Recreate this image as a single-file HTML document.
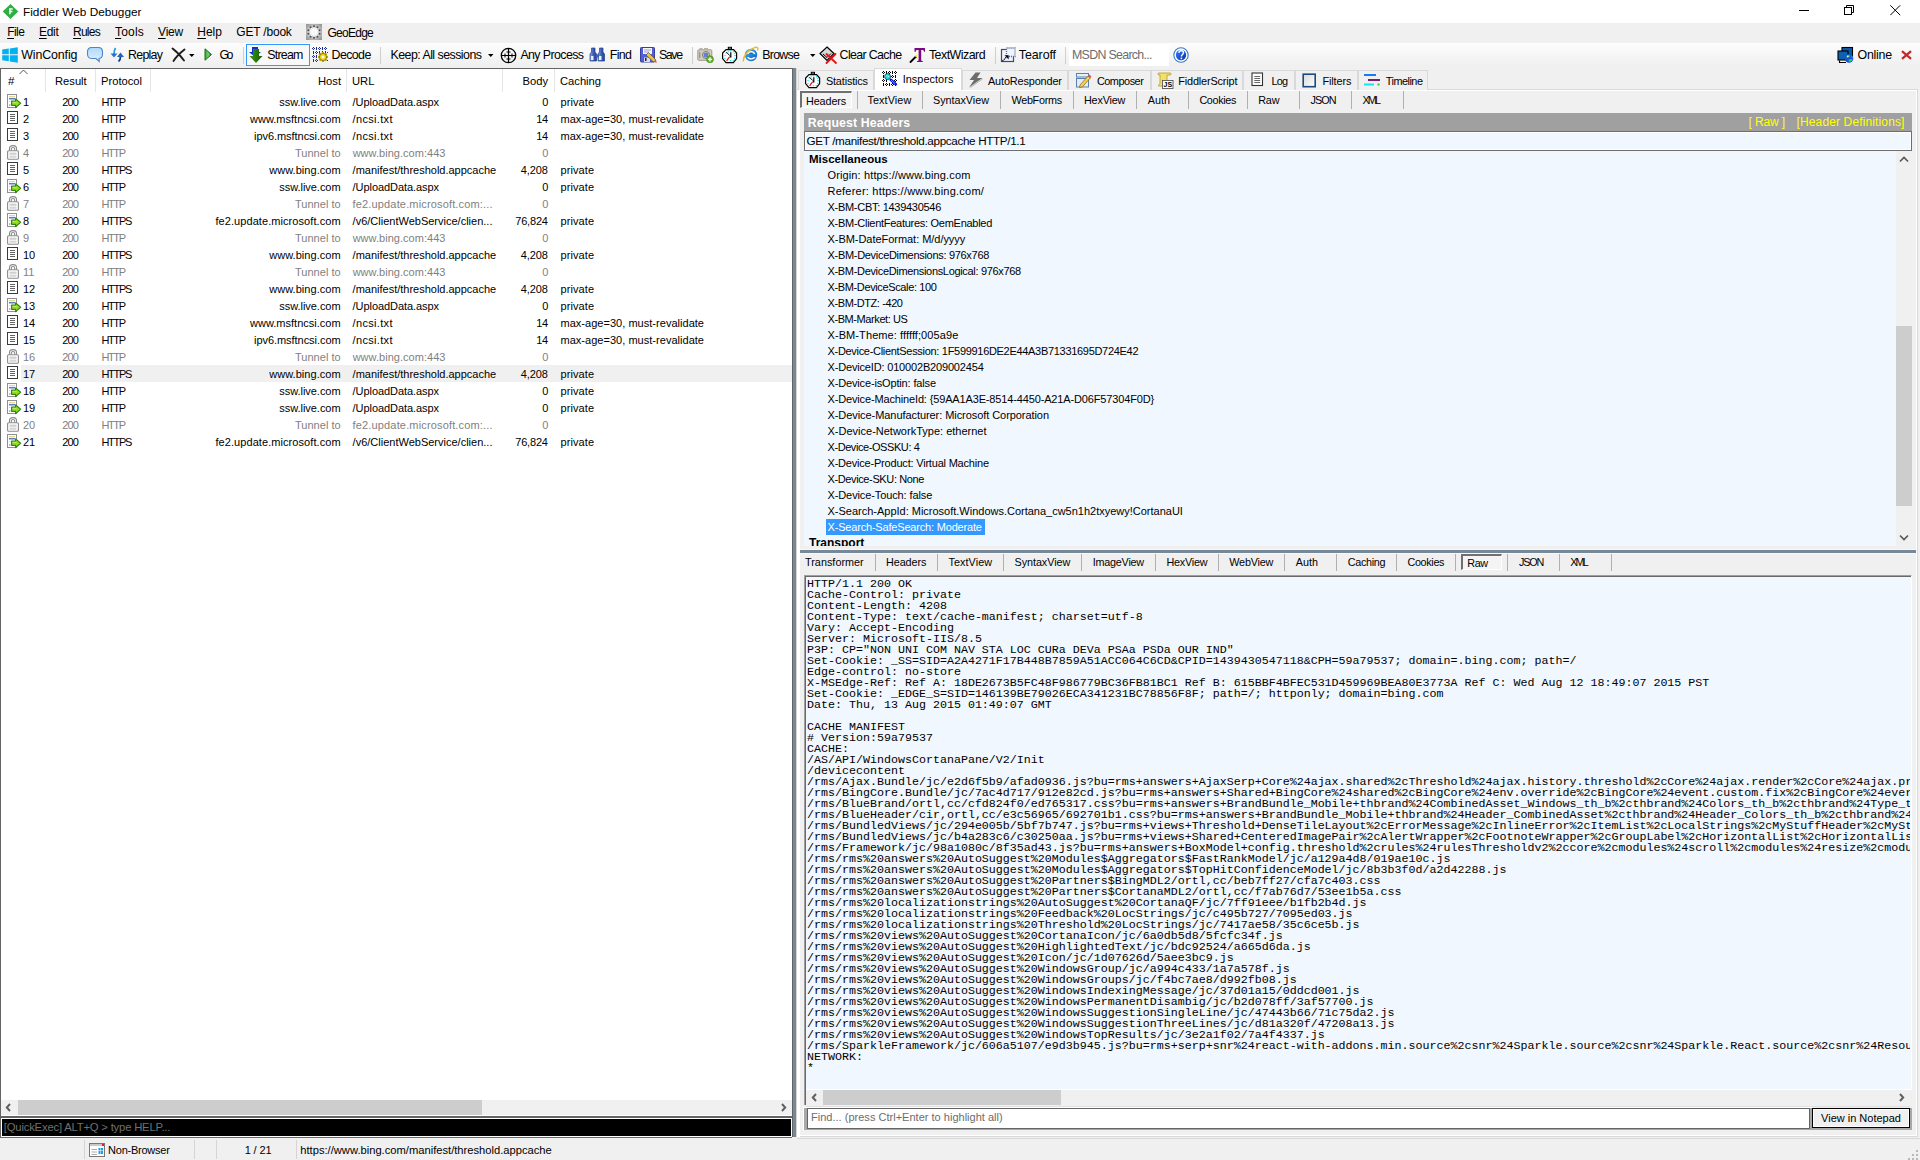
<!DOCTYPE html>
<html><head><meta charset="utf-8"><title>Fiddler Web Debugger</title>
<style>
html,body{margin:0;padding:0;}
body{width:1920px;height:1160px;overflow:hidden;position:relative;background:#f0f0f0;font-family:"Liberation Sans",sans-serif;}
.r{position:absolute;}
.t{position:absolute;white-space:pre;}
.mono{font-family:"Liberation Mono",monospace;}
</style></head><body>

<div class="r" style="left:0px;top:0px;width:1920px;height:23px;background:#ffffff;"></div>
<svg class="r" style="left:1.5px;top:3px;" width="17" height="17" viewBox="0 0 17 17"><path d="M8.5 0.9 L16.3 8.5 L8.5 16.1 L0.7 8.5 Z" fill="#2fae44"/><path d="M7.9 11.2 V6 H10.7 M7.9 8.6 H10.4" stroke="#fff" stroke-width="1.5" fill="none"/></svg>
<div class="t " style="left:23px;top:5.41px;font-size:11.8px;line-height:15px;color:#000;font-weight:normal;">Fiddler Web Debugger</div>
<svg class="r" style="left:1799px;top:10px;" width="10" height="1" viewBox="0 0 10 1"><rect x="0" y="0" width="10" height="1" fill="#000"/></svg>
<svg class="r" style="left:1843px;top:4px;" width="13" height="13" viewBox="0 0 13 13"><rect x="1.5" y="3.5" width="7" height="7" fill="none" stroke="#000"/><path d="M3.5 3.5 V1.5 H10.5 V8.5 H8.5" fill="none" stroke="#000"/></svg>
<svg class="r" style="left:1890px;top:5px;" width="11" height="11" viewBox="0 0 11 11"><path d="M0.3 0.3 L10.2 10.2 M10.2 0.3 L0.3 10.2" stroke="#000" stroke-width="1"/></svg>
<div class="r" style="left:0px;top:23px;width:1920px;height:20px;background:#f0f0f0;"></div>
<div class="t " style="left:7.2px;top:24.84px;font-size:12.0px;line-height:15px;color:#000;font-weight:normal;text-underline-offset:1.5px;letter-spacing:-0.540px;"><u>F</u>ile</div>
<div class="t " style="left:39.0px;top:24.84px;font-size:12.0px;line-height:15px;color:#000;font-weight:normal;text-underline-offset:1.5px;letter-spacing:-0.317px;"><u>E</u>dit</div>
<div class="t " style="left:73.1px;top:24.84px;font-size:12.0px;line-height:15px;color:#000;font-weight:normal;text-underline-offset:1.5px;letter-spacing:-0.790px;"><u>R</u>ules</div>
<div class="t " style="left:115.0px;top:24.84px;font-size:12.0px;line-height:15px;color:#000;font-weight:normal;text-underline-offset:1.5px;letter-spacing:0.183px;"><u>T</u>ools</div>
<div class="t " style="left:158.1px;top:24.84px;font-size:12.0px;line-height:15px;color:#000;font-weight:normal;text-underline-offset:1.5px;letter-spacing:-0.267px;"><u>V</u>iew</div>
<div class="t " style="left:197.25px;top:24.84px;font-size:12.0px;line-height:15px;color:#000;font-weight:normal;text-underline-offset:1.5px;letter-spacing:-0.003px;"><u>H</u>elp</div>
<div class="t " style="left:236.25px;top:24.84px;font-size:12.0px;line-height:15px;color:#000;font-weight:normal;letter-spacing:-0.191px;">GET /book</div>
<svg class="r" style="left:306px;top:24px;" width="16" height="16" viewBox="0 0 16 16"><defs><radialGradient id="ge1" cx="0.5" cy="0.5" r="0.6"><stop offset="0" stop-color="#f4f4f4"/><stop offset="0.6" stop-color="#c8c8c8"/><stop offset="1" stop-color="#9a9a9a"/></radialGradient></defs><rect x="0" y="0" width="16" height="16" fill="url(#ge1)"/><path d="M9.14 8.37 L12.76 9.55 M8.71 8.97 L10.94 12.05 M8.00 9.20 L8.00 13.00 M7.29 8.97 L5.06 12.05 M6.86 8.37 L3.24 9.55 M6.86 7.63 L3.24 6.45 M7.29 7.03 L5.06 3.95 M8.00 6.80 L8.00 3.00 M8.71 7.03 L10.94 3.95 M9.14 7.63 L12.76 6.45 " stroke="#ffffff" stroke-width="1.3"/><circle cx="13.52" cy="9.79" r="1.05" fill="#505050"/><circle cx="11.41" cy="12.69" r="1.05" fill="#505050"/><circle cx="8.00" cy="13.80" r="1.05" fill="#505050"/><circle cx="4.59" cy="12.69" r="1.05" fill="#505050"/><circle cx="2.48" cy="9.79" r="1.05" fill="#505050"/><circle cx="2.48" cy="6.21" r="1.05" fill="#505050"/><circle cx="4.59" cy="3.31" r="1.05" fill="#505050"/><circle cx="8.00" cy="2.20" r="1.05" fill="#505050"/><circle cx="11.41" cy="3.31" r="1.05" fill="#505050"/><circle cx="13.52" cy="6.21" r="1.05" fill="#505050"/><circle cx="8" cy="8" r="2" fill="#f8f8f8"/></svg>
<div class="t " style="left:327.5px;top:25.84px;font-size:12.0px;line-height:15px;color:#000;font-weight:normal;letter-spacing:-0.742px;">GeoEdge</div>
<div class="r" style="left:0px;top:43px;width:1920px;height:25px;background:linear-gradient(#fdfdfd 0%, #f8f8f8 35%, #f3f3f3 65%, #f0f0f0 88%, #f0f0f0 100%);"></div>
<svg class="r" style="left:2px;top:47px;" width="16" height="16" viewBox="0 0 16 16"><path d="M0.2 2.6 L6.8 1.6 V7.3 H0.2 Z M7.8 1.4 L15.8 0.2 V7.3 H7.8 Z M0.2 8.3 H6.8 V14.2 L0.2 13.3 Z M7.8 8.3 H15.8 V15.8 L7.8 14.4 Z" fill="#03b0f0"/></svg>
<div class="t " style="left:21.25px;top:46.70px;font-size:12.4px;line-height:16px;color:#000;font-weight:normal;letter-spacing:-0.122px;">WinConfig</div>
<svg class="r" style="left:86px;top:46px;" width="18" height="17" viewBox="0 0 18 17"><defs><linearGradient id="bg1" x1="0" y1="0" x2="0" y2="1"><stop offset="0" stop-color="#b0d8fb"/><stop offset="1" stop-color="#e0f2ff"/></linearGradient></defs><path d="M5.5 1.5 H12.5 C15 1.5 16.5 3.2 16.5 6 V8 C16.5 10.6 15 12.5 12.5 12.5 H13 L13.2 15.5 L10 12.5 H5.5 C3 12.5 1.5 10.6 1.5 8 V6 C1.5 3.2 3 1.5 5.5 1.5 Z" fill="url(#bg1)" stroke="#4a86c8" stroke-width="1.1"/></svg>
<svg class="r" style="left:109px;top:47px;" width="16" height="16" viewBox="0 0 16 16"><path d="M6.5 1 C5.5 2.5 5 4 5 7" stroke="#1ea0e0" stroke-width="1.8" fill="none"/><path d="M1.5 6.5 H8.5 L5 10.5 Z" fill="#2a6fd0"/><path d="M11.5 9.5 C11.5 12 11 13.5 9.5 14.5" stroke="#123a8a" stroke-width="1.8" fill="none"/><path d="M8 10 H15 L11.5 5.5 Z" fill="#2a60c0"/></svg>
<div class="t " style="left:128.1px;top:46.70px;font-size:12.4px;line-height:16px;color:#000;font-weight:normal;letter-spacing:-0.765px;">Replay</div>
<svg class="r" style="left:171px;top:47px;" width="16" height="16" viewBox="0 0 16 16"><path d="M1.5 1.5 C5 4 9 8 13 13.5 M13.5 2.5 C9 6 5 10 2.5 14" stroke="#1c1c1c" stroke-width="1.9" fill="none" stroke-linecap="round"/></svg>
<svg class="r" style="left:189px;top:54px;" width="6" height="4" viewBox="0 0 6 4"><path d="M0 0 H5.5 L2.75 3 Z" fill="#000"/></svg>
<svg class="r" style="left:204px;top:48px;" width="9" height="13" viewBox="0 0 9 13"><defs><linearGradient id="gg1" x1="0" y1="0" x2="1" y2="0"><stop offset="0" stop-color="#40a040"/><stop offset="0.5" stop-color="#70d070"/><stop offset="1" stop-color="#208020"/></linearGradient></defs><path d="M1 0.8 L7.5 6.5 L1 12.2 Z" fill="url(#gg1)" stroke="#137013" stroke-width="1"/></svg>
<div class="t " style="left:219.4px;top:46.70px;font-size:12.4px;line-height:16px;color:#000;font-weight:normal;letter-spacing:-2.454px;">Go</div>
<div class="r" style="left:243px;top:47px;width:1px;height:17px;background:#cfcfcf;"></div>
<div class="r" style="left:246px;top:44px;width:64px;height:22px;background:#f8f8f8;box-sizing:border-box;border:1px solid #3399ff;"></div>
<svg class="r" style="left:249px;top:46px;" width="14" height="18" viewBox="0 0 14 18"><path d="M3 1 H9 V6 H12 L6 11 L0 6 H3 Z" fill="#1030d0"/><defs><linearGradient id="sg1" x1="0" y1="0" x2="1" y2="0"><stop offset="0" stop-color="#3a9a10"/><stop offset="1" stop-color="#1a5a08"/></linearGradient></defs><path d="M4 3 H10 V10 H13.5 L7 17 L0.5 10 H4 Z" fill="url(#sg1)"/></svg>
<div class="t " style="left:267.2px;top:46.70px;font-size:12.4px;line-height:16px;color:#000;font-weight:normal;letter-spacing:-0.738px;">Stream</div>
<svg class="r" style="left:311px;top:46px;" width="18" height="17" viewBox="0 0 18 17"><g fill="#1a2a9a"><rect x="2.0" y="1.0" width="1" height="1"/><rect x="1.0" y="2.0" width="1" height="1"/><rect x="3.0" y="2.0" width="1" height="1"/><rect x="2.0" y="3.0" width="1" height="1"/><rect x="5.0" y="1.0" width="1" height="3"/><rect x="8.0" y="1.0" width="1" height="1"/><rect x="7.0" y="2.0" width="1" height="1"/><rect x="9.0" y="2.0" width="1" height="1"/><rect x="8.0" y="3.0" width="1" height="1"/><rect x="11.0" y="1.0" width="1" height="3"/><rect x="14.0" y="1.0" width="1" height="1"/><rect x="13.0" y="2.0" width="1" height="1"/><rect x="15.0" y="2.0" width="1" height="1"/><rect x="14.0" y="3.0" width="1" height="1"/><rect x="2.0" y="5.0" width="1" height="3"/><rect x="5.0" y="5.0" width="1" height="1"/><rect x="4.0" y="6.0" width="1" height="1"/><rect x="6.0" y="6.0" width="1" height="1"/><rect x="5.0" y="7.0" width="1" height="1"/><rect x="8.0" y="5.0" width="1" height="3"/><rect x="11.0" y="5.0" width="1" height="3"/><rect x="14.0" y="5.0" width="1" height="3"/><rect x="2.0" y="9.0" width="1" height="1"/><rect x="1.0" y="10.0" width="1" height="1"/><rect x="3.0" y="10.0" width="1" height="1"/><rect x="2.0" y="11.0" width="1" height="1"/><rect x="5.0" y="9.0" width="1" height="3"/><rect x="2.0" y="13.0" width="1" height="3"/><rect x="5.0" y="13.0" width="1" height="1"/><rect x="4.0" y="14.0" width="1" height="1"/><rect x="6.0" y="14.0" width="1" height="1"/><rect x="5.0" y="15.0" width="1" height="1"/><rect x="16" y="6" width="1" height="1"/><rect x="16" y="14" width="1" height="1"/></g><g fill="#c8a800"><rect x="10.9" y="6" width="2.2" height="2.4" transform="rotate(0 12 11)"/><rect x="10.9" y="6" width="2.2" height="2.4" transform="rotate(45 12 11)"/><rect x="10.9" y="6" width="2.2" height="2.4" transform="rotate(90 12 11)"/><rect x="10.9" y="6" width="2.2" height="2.4" transform="rotate(135 12 11)"/><rect x="10.9" y="6" width="2.2" height="2.4" transform="rotate(180 12 11)"/><rect x="10.9" y="6" width="2.2" height="2.4" transform="rotate(225 12 11)"/><rect x="10.9" y="6" width="2.2" height="2.4" transform="rotate(270 12 11)"/><rect x="10.9" y="6" width="2.2" height="2.4" transform="rotate(315 12 11)"/></g><circle cx="12" cy="11" r="3.6" fill="#f0d820" stroke="#807000" stroke-width="0.9"/><circle cx="12" cy="11" r="1.3" fill="#fff"/></svg>
<div class="t " style="left:331.6px;top:46.70px;font-size:12.4px;line-height:16px;color:#000;font-weight:normal;letter-spacing:-0.604px;">Decode</div>
<div class="r" style="left:380px;top:47px;width:1px;height:17px;background:#cfcfcf;"></div>
<div class="t " style="left:390.5px;top:46.70px;font-size:12.4px;line-height:16px;color:#000;font-weight:normal;letter-spacing:-0.537px;">Keep: All sessions</div>
<svg class="r" style="left:488px;top:54px;" width="6" height="4" viewBox="0 0 6 4"><path d="M0 0 H5.5 L2.75 3 Z" fill="#000"/></svg>
<svg class="r" style="left:500px;top:47px;" width="17" height="17" viewBox="0 0 17 17"><circle cx="8.5" cy="8.5" r="7.2" fill="none" stroke="#000" stroke-width="1.3"/><path d="M8.5 1.5 V15.5 M1.5 8.5 H15.5" stroke="#000" stroke-width="1.2"/><path d="M5 6.5 V10.5 M12 6.5 V10.5 M6.5 5 H10.5 M6.5 12 H10.5" stroke="#000" stroke-width="1"/></svg>
<div class="t " style="left:520.4px;top:46.70px;font-size:12.4px;line-height:16px;color:#000;font-weight:normal;letter-spacing:-0.593px;">Any Process</div>
<svg class="r" style="left:589px;top:47px;" width="17" height="15" viewBox="0 0 17 15"><defs><linearGradient id="bn1" x1="0" y1="0" x2="1" y2="0"><stop offset="0" stop-color="#8aa8e0"/><stop offset="0.5" stop-color="#3a5fb8"/><stop offset="1" stop-color="#24418a"/></linearGradient></defs><path d="M2.5 1 H6 V5 L7.5 7 V14 H1 V7 L2.5 5 Z" fill="url(#bn1)" stroke="#24418a" stroke-width="0.7"/><path d="M10.5 1 H14 V5 L15.5 7 V14 H9 V7 L10.5 5 Z" fill="url(#bn1)" stroke="#24418a" stroke-width="0.7"/><rect x="7" y="7.5" width="3" height="3" fill="#3a5fb8"/><rect x="2" y="9" width="2.5" height="4" fill="#e8eefa"/><rect x="10" y="9" width="2.5" height="4" fill="#e8eefa"/></svg>
<div class="t " style="left:609.8px;top:46.70px;font-size:12.4px;line-height:16px;color:#000;font-weight:normal;letter-spacing:-0.673px;">Find</div>
<svg class="r" style="left:640px;top:47px;" width="17" height="17" viewBox="0 0 17 17"><rect x="0.5" y="0.5" width="14" height="14.5" rx="0.8" fill="#5060d8" stroke="#3a40a0"/><rect x="3" y="1" width="9" height="6" fill="#f4f4fa"/><path d="M4 3 H11 M4 5 H9" stroke="#9090c0" stroke-width="0.8"/><rect x="4" y="10.5" width="6" height="4.5" fill="#d8dcf0"/><rect x="5" y="11" width="1.5" height="3" fill="#222"/><path d="M6 8 L13.5 15 L16 13 L8.5 5.5 Z" fill="#f0c040" stroke="#505050" stroke-width="0.7"/><path d="M13.5 15 L16 13 L16.8 15.8 Z" fill="#e05050"/></svg>
<div class="t " style="left:658.9px;top:46.70px;font-size:12.4px;line-height:16px;color:#000;font-weight:normal;letter-spacing:-1.357px;">Save</div>
<div class="r" style="left:692px;top:47px;width:1px;height:17px;background:#cfcfcf;"></div>
<svg class="r" style="left:697px;top:47px;" width="18" height="16" viewBox="0 0 18 16"><rect x="0.8" y="2.8" width="14" height="10.5" rx="1" fill="#d4cfc4" stroke="#a09a8a" stroke-width="1"/><rect x="2.5" y="1" width="3" height="2" fill="#b8b2a4"/><rect x="7" y="1" width="4" height="2" fill="#b8b2a4"/><path d="M2 5 L3.5 6 L2 7 L3.5 8 L2 9 L3.5 10 L2 11" stroke="#8a857a" stroke-width="0.8" fill="none"/><circle cx="9" cy="8" r="3.6" fill="#c0b8a8" stroke="#8a857a"/><rect x="7" y="6" width="4" height="4" fill="#6080e0"/><circle cx="13" cy="12.3" r="3.5" fill="#60b020" stroke="#3a8a10" stroke-width="0.6"/><path d="M13 10.2 V14.4 M10.9 12.3 H15.1" stroke="#fff" stroke-width="1.3"/></svg>
<svg class="r" style="left:721px;top:46px;" width="17" height="18" viewBox="0 0 17 18"><rect x="7.3" y="1.3" width="3.2" height="1.6" fill="none" stroke="#000" stroke-width="1"/><path d="M5 3.6 H12.6 L15.6 7 V12.6 L12.4 16.6 H5 L1.6 12.6 V7 Z" fill="#fff" stroke="#000" stroke-width="1.2"/><g fill="#10e8f0"><rect x="9" y="4.3" width="1.2" height="1.2"/><rect x="11.8" y="5.2" width="1.2" height="1.2"/><rect x="13.2" y="7" width="1.2" height="1.2"/><rect x="13.4" y="9" width="1.4" height="1.2"/><rect x="13.2" y="11.8" width="1.2" height="1.2"/><rect x="11.6" y="14" width="1.2" height="1.2"/><rect x="8.8" y="14" width="1.2" height="1.2"/><rect x="3.4" y="12" width="1.2" height="1.2"/><rect x="3.4" y="9" width="1.2" height="1.2"/><rect x="4.4" y="6.4" width="1.2" height="1.2"/><rect x="6.6" y="5.2" width="1.2" height="1.2"/></g><path d="M5.4 6.2 L8.8 9.6" stroke="#000" stroke-width="1"/><path d="M9.8 6.2 V10.8 H8.6" stroke="#000" stroke-width="1.2" fill="none"/><path d="M8.4 11 L5.6 14.8" stroke="#e00000" stroke-width="1.2"/></svg>
<svg class="r" style="left:742px;top:46px;" width="17" height="17" viewBox="0 0 17 17"><defs><linearGradient id="ie1" x1="0" y1="0" x2="1" y2="1"><stop offset="0" stop-color="#40b0f0"/><stop offset="1" stop-color="#1060c0"/></linearGradient></defs><circle cx="9" cy="9" r="6.2" fill="url(#ie1)"/><path d="M4.8 8.6 H13.4 C13.2 6.5 11.5 5 9.2 5 C7 5 5.2 6.4 4.8 8.6 Z" fill="#fff"/><rect x="4.8" y="8" width="8.4" height="2.2" fill="url(#ie1)"/><path d="M6.5 8.2 C6.8 7 7.8 6.5 9.2 6.5 C10.6 6.5 11.5 7.2 11.8 8.2 Z" fill="#1a70c8"/><path d="M5 11 C6 13 7.8 13.8 9.5 13.6 C11.5 13.3 12.8 12.5 13.6 11.2 H11.2 C10.6 11.9 9.9 12.2 9.2 12.2 C7.9 12.2 7 11.7 6.6 11 Z" fill="#fff"/><path d="M1.5 15.5 C0.5 11 6 4 12 1.8 C15.5 0.5 16.5 2 15.5 4.5" stroke="#f0b820" stroke-width="1.4" fill="none"/></svg>
<div class="t " style="left:762.2px;top:46.70px;font-size:12.4px;line-height:16px;color:#000;font-weight:normal;letter-spacing:-0.711px;">Browse</div>
<svg class="r" style="left:810px;top:54px;" width="6" height="4" viewBox="0 0 6 4"><path d="M0 0 H5.5 L2.75 3 Z" fill="#000"/></svg>
<svg class="r" style="left:819px;top:46px;" width="18" height="18" viewBox="0 0 18 18"><path d="M8 1 L15 7.5 L8 14.5 L1 7.5 Z" fill="#d8d8d8" stroke="#000" stroke-width="1.2"/><path d="M4 8 L8 11.5 L12 7.5" stroke="#000" stroke-width="1" fill="none"/><path d="M7.5 8 L17 17 M16.5 8 L7.5 17" stroke="#e81010" stroke-width="1.8" stroke-linecap="round"/></svg>
<div class="t " style="left:839.6px;top:46.70px;font-size:12.4px;line-height:16px;color:#000;font-weight:normal;letter-spacing:-0.644px;">Clear Cache</div>
<svg class="r" style="left:909px;top:47px;" width="18" height="16" viewBox="0 0 18 16"><path d="M5.5 1 H16 V4.8 H15 L14.3 3 H12.2 V13.5 L13.8 14.3 V15 H8 V14.3 L9.6 13.5 V3 H7.4 L6.7 4.8 H5.5 Z" fill="#7a0a80"/><path d="M1.5 15 L7 9.5" stroke="#000" stroke-width="1.8" stroke-linecap="round"/><circle cx="7.3" cy="8.8" r="1.3" fill="#ffff20"/></svg>
<div class="t " style="left:928.9px;top:46.70px;font-size:12.4px;line-height:16px;color:#000;font-weight:normal;letter-spacing:-0.513px;">TextWizard</div>
<div class="r" style="left:995px;top:47px;width:1px;height:17px;background:#cfcfcf;"></div>
<svg class="r" style="left:1000px;top:47px;" width="17" height="16" viewBox="0 0 17 16"><rect x="1.5" y="2.5" width="12" height="12" fill="#f4f2f8" stroke="#2f4f80" stroke-width="1.2"/><rect x="6.5" y="1" width="8.5" height="8.5" fill="#f0f4ff" stroke="#5a6a9a" stroke-width="1.3" stroke-dasharray="1.1 0.9"/><path d="M2.5 14 L8 8.5" stroke="#000a30" stroke-width="1.3" stroke-dasharray="1.2 0.8"/><path d="M4.5 8.2 H8.7 V12.4 Z" fill="#000a30"/></svg>
<div class="t " style="left:1018.8px;top:46.70px;font-size:12.4px;line-height:16px;color:#000;font-weight:normal;letter-spacing:-0.066px;">Tearoff</div>
<div class="r" style="left:1065px;top:47px;width:1px;height:17px;background:#cfcfcf;"></div>
<div class="r" style="left:1069px;top:44px;width:100px;height:22px;background:#ffffff;"></div>
<div class="t " style="left:1072.0px;top:46.70px;font-size:12.4px;line-height:16px;color:#6d6d6d;font-weight:normal;letter-spacing:-0.699px;">MSDN Search...</div>
<svg class="r" style="left:1173px;top:47px;" width="16" height="16" viewBox="0 0 16 16"><defs><linearGradient id="hp1" x1="0" y1="0" x2="1" y2="1"><stop offset="0" stop-color="#3a80f8"/><stop offset="1" stop-color="#0030b0"/></linearGradient></defs><circle cx="8" cy="8" r="7.2" fill="#fff" stroke="#3a78c8" stroke-width="1.1"/><circle cx="8" cy="8" r="5.2" fill="url(#hp1)"/><path d="M5.8 5.8 C6 4.3 7 3.8 8.2 3.8 C9.6 3.8 10.5 4.7 10.5 5.8 C10.5 7.3 8.4 7.6 8.4 9.4" stroke="#fff" stroke-width="1.4" fill="none"/><rect x="7.6" y="10.6" width="1.6" height="1.6" fill="#fff"/></svg>
<svg class="r" style="left:1837px;top:46px;" width="18" height="18" viewBox="0 0 18 18"><rect x="5" y="1.5" width="10.5" height="9" fill="#0a5aa8" stroke="#000" stroke-width="1.1"/><rect x="1" y="5" width="10" height="9" fill="#1060b0" stroke="#000" stroke-width="1.1"/><path d="M2.5 14.5 V16.5 H9" stroke="#000" stroke-width="1.1" fill="none"/><circle cx="12" cy="12.5" r="4.3" fill="#1a50e0"/><path d="M9.5 10.5 C10.5 9 12.5 9 13 10 C12 11 11 11.5 9.8 11.5 Z M11.5 14 C13 13 14.5 13 15.5 13.2 C15 15 13.5 16 12 15.5 Z M14 9.5 C15 10 16 11 16 12 C15 11.5 14.5 11 14 9.5 Z" fill="#20e040"/><circle cx="10.8" cy="10.3" r="0.9" fill="#e0ffe0"/></svg>
<div class="t " style="left:1857.6px;top:46.70px;font-size:12.4px;line-height:16px;color:#000;font-weight:normal;letter-spacing:-0.267px;">Online</div>
<svg class="r" style="left:1901px;top:50px;" width="11" height="10" viewBox="0 0 11 10"><path d="M1.8 1.8 L9.2 8.2 M9.2 1.8 L1.8 8.2" stroke="#c02a2a" stroke-width="2.2" stroke-linecap="square"/></svg>
<div class="r" style="left:0px;top:68px;width:792px;height:1069px;background:#ffffff;"></div>
<div class="r" style="left:0px;top:68px;width:792px;height:1px;background:#646464;"></div>
<div class="r" style="left:0px;top:68px;width:1px;height:1070px;background:#646464;"></div>
<div class="r" style="left:45px;top:69px;width:1px;height:23px;background:#e5e5e5;"></div>
<div class="r" style="left:95px;top:69px;width:1px;height:23px;background:#e5e5e5;"></div>
<div class="r" style="left:150px;top:69px;width:1px;height:23px;background:#e5e5e5;"></div>
<div class="r" style="left:346px;top:69px;width:1px;height:23px;background:#e5e5e5;"></div>
<div class="r" style="left:502px;top:69px;width:1px;height:23px;background:#e5e5e5;"></div>
<div class="r" style="left:554px;top:69px;width:1px;height:23px;background:#e5e5e5;"></div>
<svg class="r" style="left:19px;top:69px;" width="9" height="6" viewBox="0 0 9 6"><path d="M0.5 5 L4.5 1 L8.5 5" fill="none" stroke="#555" stroke-width="1"/></svg>
<div class="t " style="left:8px;top:74.02px;font-size:11.5px;line-height:14px;color:#000;font-weight:normal;">#</div>
<div class="t " style="left:55px;top:74.12px;font-size:11.2px;line-height:14px;color:#000;font-weight:normal;">Result</div>
<div class="t " style="left:101px;top:74.12px;font-size:11.2px;line-height:14px;color:#000;font-weight:normal;">Protocol</div>
<div class="t " style="right:1579px;top:74.12px;font-size:11.2px;line-height:14px;color:#000;font-weight:normal;">Host</div>
<div class="t " style="left:352px;top:74.12px;font-size:11.2px;line-height:14px;color:#000;font-weight:normal;">URL</div>
<div class="t " style="right:1372px;top:74.12px;font-size:11.2px;line-height:14px;color:#000;font-weight:normal;">Body</div>
<div class="t " style="left:560px;top:74.12px;font-size:11.2px;line-height:14px;color:#000;font-weight:normal;">Caching</div>
<svg class="r" style="left:7px;top:94px;" width="15" height="15" viewBox="0 0 15 15"><rect x="0.5" y="0.5" width="9" height="13" fill="#fff" stroke="#8f8f8f"/><path d="M2 2.5 H8" stroke="#e8d890" stroke-width="1"/><path d="M2 4.7 H8" stroke="#5a80c0" stroke-width="1.6"/><path d="M2 7.5 H3.5" stroke="#f0c8d8" stroke-width="1.2"/><path d="M2 10.5 H3.5 M2 11.5 H3.5" stroke="#c8b0e8" stroke-width="1.2"/><path d="M4.6 7.2 H8.6 V4.9 L13.6 9.3 L8.6 13.6 V11.3 H4.6 Z" fill="#98dc20" stroke="#2f8a10" stroke-width="1.2" stroke-linejoin="round"/><path d="M5.5 8.3 H9.5" stroke="#d0f080" stroke-width="0.8"/></svg>
<div class="t " style="left:23px;top:95.19px;font-size:11px;line-height:14px;color:#000000;font-weight:normal;">1</div>
<div class="t " style="left:62.2px;top:95.19px;font-size:11px;line-height:14px;color:#000000;font-weight:normal;letter-spacing:-0.785px;">200</div>
<div class="t " style="left:101.4px;top:95.19px;font-size:11px;line-height:14px;color:#000000;font-weight:normal;letter-spacing:-1.370px;">HTTP</div>
<div class="t " style="left:279.2px;top:95.19px;font-size:11px;line-height:14px;color:#000000;font-weight:normal;letter-spacing:-0.028px;">ssw.live.com</div>
<div class="t " style="left:352.6px;top:95.19px;font-size:11px;line-height:14px;color:#000000;font-weight:normal;letter-spacing:-0.070px;">/UploadData.aspx</div>
<div class="t " style="left:542.3px;top:95.19px;font-size:11px;line-height:14px;color:#000000;font-weight:normal;letter-spacing:-0.405px;">0</div>
<div class="t " style="left:560.5px;top:95.19px;font-size:11px;line-height:14px;color:#000000;font-weight:normal;letter-spacing:0.083px;">private</div>
<svg class="r" style="left:7px;top:111px;" width="12" height="14" viewBox="0 0 12 14"><rect x="0.5" y="0.5" width="10" height="12" fill="#fff" stroke="#3a3a3a"/><path d="M3 3.5 H8 M3 5.5 H8 M3 7.5 H8 M3 9.5 H8" stroke="#505050" stroke-width="0.9"/></svg>
<div class="t " style="left:23px;top:112.19px;font-size:11px;line-height:14px;color:#000000;font-weight:normal;">2</div>
<div class="t " style="left:62.2px;top:112.19px;font-size:11px;line-height:14px;color:#000000;font-weight:normal;letter-spacing:-0.785px;">200</div>
<div class="t " style="left:101.4px;top:112.19px;font-size:11px;line-height:14px;color:#000000;font-weight:normal;letter-spacing:-1.370px;">HTTP</div>
<div class="t " style="left:250.055px;top:112.19px;font-size:11px;line-height:14px;color:#000000;font-weight:normal;letter-spacing:0.005px;">www.msftncsi.com</div>
<div class="t " style="left:352.6px;top:112.19px;font-size:11px;line-height:14px;color:#000000;font-weight:normal;letter-spacing:0.326px;">/ncsi.txt</div>
<div class="t " style="left:536.2px;top:112.19px;font-size:11px;line-height:14px;color:#000000;font-weight:normal;letter-spacing:-0.410px;">14</div>
<div class="t " style="left:560.5px;top:112.19px;font-size:11px;line-height:14px;color:#000000;font-weight:normal;letter-spacing:0.028px;">max-age=30, must-revalidate</div>
<svg class="r" style="left:7px;top:128px;" width="12" height="14" viewBox="0 0 12 14"><rect x="0.5" y="0.5" width="10" height="12" fill="#fff" stroke="#3a3a3a"/><path d="M3 3.5 H8 M3 5.5 H8 M3 7.5 H8 M3 9.5 H8" stroke="#505050" stroke-width="0.9"/></svg>
<div class="t " style="left:23px;top:129.19px;font-size:11px;line-height:14px;color:#000000;font-weight:normal;">3</div>
<div class="t " style="left:62.2px;top:129.19px;font-size:11px;line-height:14px;color:#000000;font-weight:normal;letter-spacing:-0.785px;">200</div>
<div class="t " style="left:101.4px;top:129.19px;font-size:11px;line-height:14px;color:#000000;font-weight:normal;letter-spacing:-1.370px;">HTTP</div>
<div class="t " style="left:254.0px;top:129.19px;font-size:11px;line-height:14px;color:#000000;font-weight:normal;letter-spacing:-0.050px;">ipv6.msftncsi.com</div>
<div class="t " style="left:352.6px;top:129.19px;font-size:11px;line-height:14px;color:#000000;font-weight:normal;letter-spacing:0.326px;">/ncsi.txt</div>
<div class="t " style="left:536.2px;top:129.19px;font-size:11px;line-height:14px;color:#000000;font-weight:normal;letter-spacing:-0.410px;">14</div>
<div class="t " style="left:560.5px;top:129.19px;font-size:11px;line-height:14px;color:#000000;font-weight:normal;letter-spacing:0.028px;">max-age=30, must-revalidate</div>
<svg class="r" style="left:7px;top:145px;" width="13" height="15" viewBox="0 0 13 15"><path d="M2.5 5.8 V3.5 C2.5 1.4 4 0.6 6 0.6 C8 0.6 9.5 1.4 9.5 3.5 V5.8" fill="none" stroke="#8a8a8a" stroke-width="1.1"/><path d="M4.3 5.8 V4.2 C4.3 3 5 2.5 6 2.5 C7 2.5 7.7 3 7.7 4.2 V5.8" fill="none" stroke="#8a8a8a" stroke-width="1.1"/><rect x="0.6" y="5.8" width="10.8" height="8.4" rx="1" fill="#fff" stroke="#8a8a8a" stroke-width="1.1"/><rect x="2.5" y="7.6" width="7" height="2.2" fill="#d0d0d0"/><rect x="2.5" y="10.6" width="7" height="2.2" fill="#d6d6d6"/></svg>
<div class="t " style="left:23px;top:146.19px;font-size:11px;line-height:14px;color:#7f7f7f;font-weight:normal;">4</div>
<div class="t " style="left:62.2px;top:146.19px;font-size:11px;line-height:14px;color:#7f7f7f;font-weight:normal;letter-spacing:-0.785px;">200</div>
<div class="t " style="left:101.4px;top:146.19px;font-size:11px;line-height:14px;color:#7f7f7f;font-weight:normal;letter-spacing:-1.370px;">HTTP</div>
<div class="t " style="left:295.0px;top:146.19px;font-size:11px;line-height:14px;color:#7f7f7f;font-weight:normal;letter-spacing:0.021px;">Tunnel to</div>
<div class="t " style="left:352.65500000000003px;top:146.19px;font-size:11px;line-height:14px;color:#7f7f7f;font-weight:normal;letter-spacing:0.033px;">www.bing.com:443</div>
<div class="t " style="left:542.3px;top:146.19px;font-size:11px;line-height:14px;color:#7f7f7f;font-weight:normal;letter-spacing:-0.405px;">0</div>
<svg class="r" style="left:7px;top:162px;" width="12" height="14" viewBox="0 0 12 14"><rect x="0.5" y="0.5" width="10" height="12" fill="#fff" stroke="#3a3a3a"/><path d="M3 3.5 H8 M3 5.5 H8 M3 7.5 H8 M3 9.5 H8" stroke="#505050" stroke-width="0.9"/></svg>
<div class="t " style="left:23px;top:163.19px;font-size:11px;line-height:14px;color:#000000;font-weight:normal;">5</div>
<div class="t " style="left:62.2px;top:163.19px;font-size:11px;line-height:14px;color:#000000;font-weight:normal;letter-spacing:-0.785px;">200</div>
<div class="t " style="left:101.4px;top:163.19px;font-size:11px;line-height:14px;color:#000000;font-weight:normal;letter-spacing:-1.295px;">HTTPS</div>
<div class="t " style="left:269.255px;top:163.19px;font-size:11px;line-height:14px;color:#000000;font-weight:normal;letter-spacing:0.041px;">www.bing.com</div>
<div class="t " style="left:352.6px;top:163.19px;font-size:11px;line-height:14px;color:#000000;font-weight:normal;letter-spacing:-0.004px;">/manifest/threshold.appcache</div>
<div class="t " style="left:520.7px;top:163.19px;font-size:11px;line-height:14px;color:#000000;font-weight:normal;letter-spacing:-0.064px;">4,208</div>
<div class="t " style="left:560.5px;top:163.19px;font-size:11px;line-height:14px;color:#000000;font-weight:normal;letter-spacing:0.083px;">private</div>
<svg class="r" style="left:7px;top:179px;" width="15" height="15" viewBox="0 0 15 15"><rect x="0.5" y="0.5" width="9" height="13" fill="#fff" stroke="#8f8f8f"/><path d="M2 2.5 H8" stroke="#e8d890" stroke-width="1"/><path d="M2 4.7 H8" stroke="#5a80c0" stroke-width="1.6"/><path d="M2 7.5 H3.5" stroke="#f0c8d8" stroke-width="1.2"/><path d="M2 10.5 H3.5 M2 11.5 H3.5" stroke="#c8b0e8" stroke-width="1.2"/><path d="M4.6 7.2 H8.6 V4.9 L13.6 9.3 L8.6 13.6 V11.3 H4.6 Z" fill="#98dc20" stroke="#2f8a10" stroke-width="1.2" stroke-linejoin="round"/><path d="M5.5 8.3 H9.5" stroke="#d0f080" stroke-width="0.8"/></svg>
<div class="t " style="left:23px;top:180.19px;font-size:11px;line-height:14px;color:#000000;font-weight:normal;">6</div>
<div class="t " style="left:62.2px;top:180.19px;font-size:11px;line-height:14px;color:#000000;font-weight:normal;letter-spacing:-0.785px;">200</div>
<div class="t " style="left:101.4px;top:180.19px;font-size:11px;line-height:14px;color:#000000;font-weight:normal;letter-spacing:-1.370px;">HTTP</div>
<div class="t " style="left:279.2px;top:180.19px;font-size:11px;line-height:14px;color:#000000;font-weight:normal;letter-spacing:-0.028px;">ssw.live.com</div>
<div class="t " style="left:352.6px;top:180.19px;font-size:11px;line-height:14px;color:#000000;font-weight:normal;letter-spacing:-0.070px;">/UploadData.aspx</div>
<div class="t " style="left:542.3px;top:180.19px;font-size:11px;line-height:14px;color:#000000;font-weight:normal;letter-spacing:-0.405px;">0</div>
<div class="t " style="left:560.5px;top:180.19px;font-size:11px;line-height:14px;color:#000000;font-weight:normal;letter-spacing:0.083px;">private</div>
<svg class="r" style="left:7px;top:196px;" width="13" height="15" viewBox="0 0 13 15"><path d="M2.5 5.8 V3.5 C2.5 1.4 4 0.6 6 0.6 C8 0.6 9.5 1.4 9.5 3.5 V5.8" fill="none" stroke="#8a8a8a" stroke-width="1.1"/><path d="M4.3 5.8 V4.2 C4.3 3 5 2.5 6 2.5 C7 2.5 7.7 3 7.7 4.2 V5.8" fill="none" stroke="#8a8a8a" stroke-width="1.1"/><rect x="0.6" y="5.8" width="10.8" height="8.4" rx="1" fill="#fff" stroke="#8a8a8a" stroke-width="1.1"/><rect x="2.5" y="7.6" width="7" height="2.2" fill="#d0d0d0"/><rect x="2.5" y="10.6" width="7" height="2.2" fill="#d6d6d6"/></svg>
<div class="t " style="left:23px;top:197.19px;font-size:11px;line-height:14px;color:#7f7f7f;font-weight:normal;">7</div>
<div class="t " style="left:62.2px;top:197.19px;font-size:11px;line-height:14px;color:#7f7f7f;font-weight:normal;letter-spacing:-0.785px;">200</div>
<div class="t " style="left:101.4px;top:197.19px;font-size:11px;line-height:14px;color:#7f7f7f;font-weight:normal;letter-spacing:-1.370px;">HTTP</div>
<div class="t " style="left:295.0px;top:197.19px;font-size:11px;line-height:14px;color:#7f7f7f;font-weight:normal;letter-spacing:0.021px;">Tunnel to</div>
<div class="t " style="left:352.6px;top:197.19px;font-size:11px;line-height:14px;color:#7f7f7f;font-weight:normal;letter-spacing:0.154px;">fe2.update.microsoft.com:...</div>
<div class="t " style="left:542.3px;top:197.19px;font-size:11px;line-height:14px;color:#7f7f7f;font-weight:normal;letter-spacing:-0.405px;">0</div>
<svg class="r" style="left:7px;top:213px;" width="15" height="15" viewBox="0 0 15 15"><rect x="0.5" y="0.5" width="9" height="13" fill="#fff" stroke="#8f8f8f"/><path d="M2 2.5 H8" stroke="#e8d890" stroke-width="1"/><path d="M2 4.7 H8" stroke="#5a80c0" stroke-width="1.6"/><path d="M2 7.5 H3.5" stroke="#f0c8d8" stroke-width="1.2"/><path d="M2 10.5 H3.5 M2 11.5 H3.5" stroke="#c8b0e8" stroke-width="1.2"/><path d="M4.6 7.2 H8.6 V4.9 L13.6 9.3 L8.6 13.6 V11.3 H4.6 Z" fill="#98dc20" stroke="#2f8a10" stroke-width="1.2" stroke-linejoin="round"/><path d="M5.5 8.3 H9.5" stroke="#d0f080" stroke-width="0.8"/></svg>
<div class="t " style="left:23px;top:214.19px;font-size:11px;line-height:14px;color:#000000;font-weight:normal;">8</div>
<div class="t " style="left:62.2px;top:214.19px;font-size:11px;line-height:14px;color:#000000;font-weight:normal;letter-spacing:-0.785px;">200</div>
<div class="t " style="left:101.4px;top:214.19px;font-size:11px;line-height:14px;color:#000000;font-weight:normal;letter-spacing:-1.295px;">HTTPS</div>
<div class="t " style="left:215.5px;top:214.19px;font-size:11px;line-height:14px;color:#000000;font-weight:normal;letter-spacing:0.068px;">fe2.update.microsoft.com</div>
<div class="t " style="left:352.6px;top:214.19px;font-size:11px;line-height:14px;color:#000000;font-weight:normal;letter-spacing:0.003px;">/v6/ClientWebService/clien...</div>
<div class="t " style="left:515.2px;top:214.19px;font-size:11px;line-height:14px;color:#000000;font-weight:normal;letter-spacing:-0.172px;">76,824</div>
<div class="t " style="left:560.5px;top:214.19px;font-size:11px;line-height:14px;color:#000000;font-weight:normal;letter-spacing:0.083px;">private</div>
<svg class="r" style="left:7px;top:230px;" width="13" height="15" viewBox="0 0 13 15"><path d="M2.5 5.8 V3.5 C2.5 1.4 4 0.6 6 0.6 C8 0.6 9.5 1.4 9.5 3.5 V5.8" fill="none" stroke="#8a8a8a" stroke-width="1.1"/><path d="M4.3 5.8 V4.2 C4.3 3 5 2.5 6 2.5 C7 2.5 7.7 3 7.7 4.2 V5.8" fill="none" stroke="#8a8a8a" stroke-width="1.1"/><rect x="0.6" y="5.8" width="10.8" height="8.4" rx="1" fill="#fff" stroke="#8a8a8a" stroke-width="1.1"/><rect x="2.5" y="7.6" width="7" height="2.2" fill="#d0d0d0"/><rect x="2.5" y="10.6" width="7" height="2.2" fill="#d6d6d6"/></svg>
<div class="t " style="left:23px;top:231.19px;font-size:11px;line-height:14px;color:#7f7f7f;font-weight:normal;">9</div>
<div class="t " style="left:62.2px;top:231.19px;font-size:11px;line-height:14px;color:#7f7f7f;font-weight:normal;letter-spacing:-0.785px;">200</div>
<div class="t " style="left:101.4px;top:231.19px;font-size:11px;line-height:14px;color:#7f7f7f;font-weight:normal;letter-spacing:-1.370px;">HTTP</div>
<div class="t " style="left:295.0px;top:231.19px;font-size:11px;line-height:14px;color:#7f7f7f;font-weight:normal;letter-spacing:0.021px;">Tunnel to</div>
<div class="t " style="left:352.65500000000003px;top:231.19px;font-size:11px;line-height:14px;color:#7f7f7f;font-weight:normal;letter-spacing:0.033px;">www.bing.com:443</div>
<div class="t " style="left:542.3px;top:231.19px;font-size:11px;line-height:14px;color:#7f7f7f;font-weight:normal;letter-spacing:-0.405px;">0</div>
<svg class="r" style="left:7px;top:247px;" width="12" height="14" viewBox="0 0 12 14"><rect x="0.5" y="0.5" width="10" height="12" fill="#fff" stroke="#3a3a3a"/><path d="M3 3.5 H8 M3 5.5 H8 M3 7.5 H8 M3 9.5 H8" stroke="#505050" stroke-width="0.9"/></svg>
<div class="t " style="left:23px;top:248.19px;font-size:11px;line-height:14px;color:#000000;font-weight:normal;">10</div>
<div class="t " style="left:62.2px;top:248.19px;font-size:11px;line-height:14px;color:#000000;font-weight:normal;letter-spacing:-0.785px;">200</div>
<div class="t " style="left:101.4px;top:248.19px;font-size:11px;line-height:14px;color:#000000;font-weight:normal;letter-spacing:-1.295px;">HTTPS</div>
<div class="t " style="left:269.255px;top:248.19px;font-size:11px;line-height:14px;color:#000000;font-weight:normal;letter-spacing:0.041px;">www.bing.com</div>
<div class="t " style="left:352.6px;top:248.19px;font-size:11px;line-height:14px;color:#000000;font-weight:normal;letter-spacing:-0.004px;">/manifest/threshold.appcache</div>
<div class="t " style="left:520.7px;top:248.19px;font-size:11px;line-height:14px;color:#000000;font-weight:normal;letter-spacing:-0.064px;">4,208</div>
<div class="t " style="left:560.5px;top:248.19px;font-size:11px;line-height:14px;color:#000000;font-weight:normal;letter-spacing:0.083px;">private</div>
<svg class="r" style="left:7px;top:264px;" width="13" height="15" viewBox="0 0 13 15"><path d="M2.5 5.8 V3.5 C2.5 1.4 4 0.6 6 0.6 C8 0.6 9.5 1.4 9.5 3.5 V5.8" fill="none" stroke="#8a8a8a" stroke-width="1.1"/><path d="M4.3 5.8 V4.2 C4.3 3 5 2.5 6 2.5 C7 2.5 7.7 3 7.7 4.2 V5.8" fill="none" stroke="#8a8a8a" stroke-width="1.1"/><rect x="0.6" y="5.8" width="10.8" height="8.4" rx="1" fill="#fff" stroke="#8a8a8a" stroke-width="1.1"/><rect x="2.5" y="7.6" width="7" height="2.2" fill="#d0d0d0"/><rect x="2.5" y="10.6" width="7" height="2.2" fill="#d6d6d6"/></svg>
<div class="t " style="left:23px;top:265.19px;font-size:11px;line-height:14px;color:#7f7f7f;font-weight:normal;">11</div>
<div class="t " style="left:62.2px;top:265.19px;font-size:11px;line-height:14px;color:#7f7f7f;font-weight:normal;letter-spacing:-0.785px;">200</div>
<div class="t " style="left:101.4px;top:265.19px;font-size:11px;line-height:14px;color:#7f7f7f;font-weight:normal;letter-spacing:-1.370px;">HTTP</div>
<div class="t " style="left:295.0px;top:265.19px;font-size:11px;line-height:14px;color:#7f7f7f;font-weight:normal;letter-spacing:0.021px;">Tunnel to</div>
<div class="t " style="left:352.65500000000003px;top:265.19px;font-size:11px;line-height:14px;color:#7f7f7f;font-weight:normal;letter-spacing:0.033px;">www.bing.com:443</div>
<div class="t " style="left:542.3px;top:265.19px;font-size:11px;line-height:14px;color:#7f7f7f;font-weight:normal;letter-spacing:-0.405px;">0</div>
<svg class="r" style="left:7px;top:281px;" width="12" height="14" viewBox="0 0 12 14"><rect x="0.5" y="0.5" width="10" height="12" fill="#fff" stroke="#3a3a3a"/><path d="M3 3.5 H8 M3 5.5 H8 M3 7.5 H8 M3 9.5 H8" stroke="#505050" stroke-width="0.9"/></svg>
<div class="t " style="left:23px;top:282.19px;font-size:11px;line-height:14px;color:#000000;font-weight:normal;">12</div>
<div class="t " style="left:62.2px;top:282.19px;font-size:11px;line-height:14px;color:#000000;font-weight:normal;letter-spacing:-0.785px;">200</div>
<div class="t " style="left:101.4px;top:282.19px;font-size:11px;line-height:14px;color:#000000;font-weight:normal;letter-spacing:-1.295px;">HTTPS</div>
<div class="t " style="left:269.255px;top:282.19px;font-size:11px;line-height:14px;color:#000000;font-weight:normal;letter-spacing:0.041px;">www.bing.com</div>
<div class="t " style="left:352.6px;top:282.19px;font-size:11px;line-height:14px;color:#000000;font-weight:normal;letter-spacing:-0.004px;">/manifest/threshold.appcache</div>
<div class="t " style="left:520.7px;top:282.19px;font-size:11px;line-height:14px;color:#000000;font-weight:normal;letter-spacing:-0.064px;">4,208</div>
<div class="t " style="left:560.5px;top:282.19px;font-size:11px;line-height:14px;color:#000000;font-weight:normal;letter-spacing:0.083px;">private</div>
<svg class="r" style="left:7px;top:298px;" width="15" height="15" viewBox="0 0 15 15"><rect x="0.5" y="0.5" width="9" height="13" fill="#fff" stroke="#8f8f8f"/><path d="M2 2.5 H8" stroke="#e8d890" stroke-width="1"/><path d="M2 4.7 H8" stroke="#5a80c0" stroke-width="1.6"/><path d="M2 7.5 H3.5" stroke="#f0c8d8" stroke-width="1.2"/><path d="M2 10.5 H3.5 M2 11.5 H3.5" stroke="#c8b0e8" stroke-width="1.2"/><path d="M4.6 7.2 H8.6 V4.9 L13.6 9.3 L8.6 13.6 V11.3 H4.6 Z" fill="#98dc20" stroke="#2f8a10" stroke-width="1.2" stroke-linejoin="round"/><path d="M5.5 8.3 H9.5" stroke="#d0f080" stroke-width="0.8"/></svg>
<div class="t " style="left:23px;top:299.19px;font-size:11px;line-height:14px;color:#000000;font-weight:normal;">13</div>
<div class="t " style="left:62.2px;top:299.19px;font-size:11px;line-height:14px;color:#000000;font-weight:normal;letter-spacing:-0.785px;">200</div>
<div class="t " style="left:101.4px;top:299.19px;font-size:11px;line-height:14px;color:#000000;font-weight:normal;letter-spacing:-1.370px;">HTTP</div>
<div class="t " style="left:279.2px;top:299.19px;font-size:11px;line-height:14px;color:#000000;font-weight:normal;letter-spacing:-0.028px;">ssw.live.com</div>
<div class="t " style="left:352.6px;top:299.19px;font-size:11px;line-height:14px;color:#000000;font-weight:normal;letter-spacing:-0.070px;">/UploadData.aspx</div>
<div class="t " style="left:542.3px;top:299.19px;font-size:11px;line-height:14px;color:#000000;font-weight:normal;letter-spacing:-0.405px;">0</div>
<div class="t " style="left:560.5px;top:299.19px;font-size:11px;line-height:14px;color:#000000;font-weight:normal;letter-spacing:0.083px;">private</div>
<svg class="r" style="left:7px;top:315px;" width="12" height="14" viewBox="0 0 12 14"><rect x="0.5" y="0.5" width="10" height="12" fill="#fff" stroke="#3a3a3a"/><path d="M3 3.5 H8 M3 5.5 H8 M3 7.5 H8 M3 9.5 H8" stroke="#505050" stroke-width="0.9"/></svg>
<div class="t " style="left:23px;top:316.19px;font-size:11px;line-height:14px;color:#000000;font-weight:normal;">14</div>
<div class="t " style="left:62.2px;top:316.19px;font-size:11px;line-height:14px;color:#000000;font-weight:normal;letter-spacing:-0.785px;">200</div>
<div class="t " style="left:101.4px;top:316.19px;font-size:11px;line-height:14px;color:#000000;font-weight:normal;letter-spacing:-1.370px;">HTTP</div>
<div class="t " style="left:250.055px;top:316.19px;font-size:11px;line-height:14px;color:#000000;font-weight:normal;letter-spacing:0.005px;">www.msftncsi.com</div>
<div class="t " style="left:352.6px;top:316.19px;font-size:11px;line-height:14px;color:#000000;font-weight:normal;letter-spacing:0.326px;">/ncsi.txt</div>
<div class="t " style="left:536.2px;top:316.19px;font-size:11px;line-height:14px;color:#000000;font-weight:normal;letter-spacing:-0.410px;">14</div>
<div class="t " style="left:560.5px;top:316.19px;font-size:11px;line-height:14px;color:#000000;font-weight:normal;letter-spacing:0.028px;">max-age=30, must-revalidate</div>
<svg class="r" style="left:7px;top:332px;" width="12" height="14" viewBox="0 0 12 14"><rect x="0.5" y="0.5" width="10" height="12" fill="#fff" stroke="#3a3a3a"/><path d="M3 3.5 H8 M3 5.5 H8 M3 7.5 H8 M3 9.5 H8" stroke="#505050" stroke-width="0.9"/></svg>
<div class="t " style="left:23px;top:333.19px;font-size:11px;line-height:14px;color:#000000;font-weight:normal;">15</div>
<div class="t " style="left:62.2px;top:333.19px;font-size:11px;line-height:14px;color:#000000;font-weight:normal;letter-spacing:-0.785px;">200</div>
<div class="t " style="left:101.4px;top:333.19px;font-size:11px;line-height:14px;color:#000000;font-weight:normal;letter-spacing:-1.370px;">HTTP</div>
<div class="t " style="left:254.0px;top:333.19px;font-size:11px;line-height:14px;color:#000000;font-weight:normal;letter-spacing:-0.050px;">ipv6.msftncsi.com</div>
<div class="t " style="left:352.6px;top:333.19px;font-size:11px;line-height:14px;color:#000000;font-weight:normal;letter-spacing:0.326px;">/ncsi.txt</div>
<div class="t " style="left:536.2px;top:333.19px;font-size:11px;line-height:14px;color:#000000;font-weight:normal;letter-spacing:-0.410px;">14</div>
<div class="t " style="left:560.5px;top:333.19px;font-size:11px;line-height:14px;color:#000000;font-weight:normal;letter-spacing:0.028px;">max-age=30, must-revalidate</div>
<svg class="r" style="left:7px;top:349px;" width="13" height="15" viewBox="0 0 13 15"><path d="M2.5 5.8 V3.5 C2.5 1.4 4 0.6 6 0.6 C8 0.6 9.5 1.4 9.5 3.5 V5.8" fill="none" stroke="#8a8a8a" stroke-width="1.1"/><path d="M4.3 5.8 V4.2 C4.3 3 5 2.5 6 2.5 C7 2.5 7.7 3 7.7 4.2 V5.8" fill="none" stroke="#8a8a8a" stroke-width="1.1"/><rect x="0.6" y="5.8" width="10.8" height="8.4" rx="1" fill="#fff" stroke="#8a8a8a" stroke-width="1.1"/><rect x="2.5" y="7.6" width="7" height="2.2" fill="#d0d0d0"/><rect x="2.5" y="10.6" width="7" height="2.2" fill="#d6d6d6"/></svg>
<div class="t " style="left:23px;top:350.19px;font-size:11px;line-height:14px;color:#7f7f7f;font-weight:normal;">16</div>
<div class="t " style="left:62.2px;top:350.19px;font-size:11px;line-height:14px;color:#7f7f7f;font-weight:normal;letter-spacing:-0.785px;">200</div>
<div class="t " style="left:101.4px;top:350.19px;font-size:11px;line-height:14px;color:#7f7f7f;font-weight:normal;letter-spacing:-1.370px;">HTTP</div>
<div class="t " style="left:295.0px;top:350.19px;font-size:11px;line-height:14px;color:#7f7f7f;font-weight:normal;letter-spacing:0.021px;">Tunnel to</div>
<div class="t " style="left:352.65500000000003px;top:350.19px;font-size:11px;line-height:14px;color:#7f7f7f;font-weight:normal;letter-spacing:0.033px;">www.bing.com:443</div>
<div class="t " style="left:542.3px;top:350.19px;font-size:11px;line-height:14px;color:#7f7f7f;font-weight:normal;letter-spacing:-0.405px;">0</div>
<div class="r" style="left:21px;top:365px;width:771px;height:17px;background:#f0f0f0;"></div>
<svg class="r" style="left:7px;top:366px;" width="12" height="14" viewBox="0 0 12 14"><rect x="0.5" y="0.5" width="10" height="12" fill="#fff" stroke="#3a3a3a"/><path d="M3 3.5 H8 M3 5.5 H8 M3 7.5 H8 M3 9.5 H8" stroke="#505050" stroke-width="0.9"/></svg>
<div class="t " style="left:23px;top:367.19px;font-size:11px;line-height:14px;color:#000000;font-weight:normal;">17</div>
<div class="t " style="left:62.2px;top:367.19px;font-size:11px;line-height:14px;color:#000000;font-weight:normal;letter-spacing:-0.785px;">200</div>
<div class="t " style="left:101.4px;top:367.19px;font-size:11px;line-height:14px;color:#000000;font-weight:normal;letter-spacing:-1.295px;">HTTPS</div>
<div class="t " style="left:269.255px;top:367.19px;font-size:11px;line-height:14px;color:#000000;font-weight:normal;letter-spacing:0.041px;">www.bing.com</div>
<div class="t " style="left:352.6px;top:367.19px;font-size:11px;line-height:14px;color:#000000;font-weight:normal;letter-spacing:-0.004px;">/manifest/threshold.appcache</div>
<div class="t " style="left:520.7px;top:367.19px;font-size:11px;line-height:14px;color:#000000;font-weight:normal;letter-spacing:-0.064px;">4,208</div>
<div class="t " style="left:560.5px;top:367.19px;font-size:11px;line-height:14px;color:#000000;font-weight:normal;letter-spacing:0.083px;">private</div>
<svg class="r" style="left:7px;top:383px;" width="15" height="15" viewBox="0 0 15 15"><rect x="0.5" y="0.5" width="9" height="13" fill="#fff" stroke="#8f8f8f"/><path d="M2 2.5 H8" stroke="#e8d890" stroke-width="1"/><path d="M2 4.7 H8" stroke="#5a80c0" stroke-width="1.6"/><path d="M2 7.5 H3.5" stroke="#f0c8d8" stroke-width="1.2"/><path d="M2 10.5 H3.5 M2 11.5 H3.5" stroke="#c8b0e8" stroke-width="1.2"/><path d="M4.6 7.2 H8.6 V4.9 L13.6 9.3 L8.6 13.6 V11.3 H4.6 Z" fill="#98dc20" stroke="#2f8a10" stroke-width="1.2" stroke-linejoin="round"/><path d="M5.5 8.3 H9.5" stroke="#d0f080" stroke-width="0.8"/></svg>
<div class="t " style="left:23px;top:384.19px;font-size:11px;line-height:14px;color:#000000;font-weight:normal;">18</div>
<div class="t " style="left:62.2px;top:384.19px;font-size:11px;line-height:14px;color:#000000;font-weight:normal;letter-spacing:-0.785px;">200</div>
<div class="t " style="left:101.4px;top:384.19px;font-size:11px;line-height:14px;color:#000000;font-weight:normal;letter-spacing:-1.370px;">HTTP</div>
<div class="t " style="left:279.2px;top:384.19px;font-size:11px;line-height:14px;color:#000000;font-weight:normal;letter-spacing:-0.028px;">ssw.live.com</div>
<div class="t " style="left:352.6px;top:384.19px;font-size:11px;line-height:14px;color:#000000;font-weight:normal;letter-spacing:-0.070px;">/UploadData.aspx</div>
<div class="t " style="left:542.3px;top:384.19px;font-size:11px;line-height:14px;color:#000000;font-weight:normal;letter-spacing:-0.405px;">0</div>
<div class="t " style="left:560.5px;top:384.19px;font-size:11px;line-height:14px;color:#000000;font-weight:normal;letter-spacing:0.083px;">private</div>
<svg class="r" style="left:7px;top:400px;" width="15" height="15" viewBox="0 0 15 15"><rect x="0.5" y="0.5" width="9" height="13" fill="#fff" stroke="#8f8f8f"/><path d="M2 2.5 H8" stroke="#e8d890" stroke-width="1"/><path d="M2 4.7 H8" stroke="#5a80c0" stroke-width="1.6"/><path d="M2 7.5 H3.5" stroke="#f0c8d8" stroke-width="1.2"/><path d="M2 10.5 H3.5 M2 11.5 H3.5" stroke="#c8b0e8" stroke-width="1.2"/><path d="M4.6 7.2 H8.6 V4.9 L13.6 9.3 L8.6 13.6 V11.3 H4.6 Z" fill="#98dc20" stroke="#2f8a10" stroke-width="1.2" stroke-linejoin="round"/><path d="M5.5 8.3 H9.5" stroke="#d0f080" stroke-width="0.8"/></svg>
<div class="t " style="left:23px;top:401.19px;font-size:11px;line-height:14px;color:#000000;font-weight:normal;">19</div>
<div class="t " style="left:62.2px;top:401.19px;font-size:11px;line-height:14px;color:#000000;font-weight:normal;letter-spacing:-0.785px;">200</div>
<div class="t " style="left:101.4px;top:401.19px;font-size:11px;line-height:14px;color:#000000;font-weight:normal;letter-spacing:-1.370px;">HTTP</div>
<div class="t " style="left:279.2px;top:401.19px;font-size:11px;line-height:14px;color:#000000;font-weight:normal;letter-spacing:-0.028px;">ssw.live.com</div>
<div class="t " style="left:352.6px;top:401.19px;font-size:11px;line-height:14px;color:#000000;font-weight:normal;letter-spacing:-0.070px;">/UploadData.aspx</div>
<div class="t " style="left:542.3px;top:401.19px;font-size:11px;line-height:14px;color:#000000;font-weight:normal;letter-spacing:-0.405px;">0</div>
<div class="t " style="left:560.5px;top:401.19px;font-size:11px;line-height:14px;color:#000000;font-weight:normal;letter-spacing:0.083px;">private</div>
<svg class="r" style="left:7px;top:417px;" width="13" height="15" viewBox="0 0 13 15"><path d="M2.5 5.8 V3.5 C2.5 1.4 4 0.6 6 0.6 C8 0.6 9.5 1.4 9.5 3.5 V5.8" fill="none" stroke="#8a8a8a" stroke-width="1.1"/><path d="M4.3 5.8 V4.2 C4.3 3 5 2.5 6 2.5 C7 2.5 7.7 3 7.7 4.2 V5.8" fill="none" stroke="#8a8a8a" stroke-width="1.1"/><rect x="0.6" y="5.8" width="10.8" height="8.4" rx="1" fill="#fff" stroke="#8a8a8a" stroke-width="1.1"/><rect x="2.5" y="7.6" width="7" height="2.2" fill="#d0d0d0"/><rect x="2.5" y="10.6" width="7" height="2.2" fill="#d6d6d6"/></svg>
<div class="t " style="left:23px;top:418.19px;font-size:11px;line-height:14px;color:#7f7f7f;font-weight:normal;">20</div>
<div class="t " style="left:62.2px;top:418.19px;font-size:11px;line-height:14px;color:#7f7f7f;font-weight:normal;letter-spacing:-0.785px;">200</div>
<div class="t " style="left:101.4px;top:418.19px;font-size:11px;line-height:14px;color:#7f7f7f;font-weight:normal;letter-spacing:-1.370px;">HTTP</div>
<div class="t " style="left:295.0px;top:418.19px;font-size:11px;line-height:14px;color:#7f7f7f;font-weight:normal;letter-spacing:0.021px;">Tunnel to</div>
<div class="t " style="left:352.6px;top:418.19px;font-size:11px;line-height:14px;color:#7f7f7f;font-weight:normal;letter-spacing:0.154px;">fe2.update.microsoft.com:...</div>
<div class="t " style="left:542.3px;top:418.19px;font-size:11px;line-height:14px;color:#7f7f7f;font-weight:normal;letter-spacing:-0.405px;">0</div>
<svg class="r" style="left:7px;top:434px;" width="15" height="15" viewBox="0 0 15 15"><rect x="0.5" y="0.5" width="9" height="13" fill="#fff" stroke="#8f8f8f"/><path d="M2 2.5 H8" stroke="#e8d890" stroke-width="1"/><path d="M2 4.7 H8" stroke="#5a80c0" stroke-width="1.6"/><path d="M2 7.5 H3.5" stroke="#f0c8d8" stroke-width="1.2"/><path d="M2 10.5 H3.5 M2 11.5 H3.5" stroke="#c8b0e8" stroke-width="1.2"/><path d="M4.6 7.2 H8.6 V4.9 L13.6 9.3 L8.6 13.6 V11.3 H4.6 Z" fill="#98dc20" stroke="#2f8a10" stroke-width="1.2" stroke-linejoin="round"/><path d="M5.5 8.3 H9.5" stroke="#d0f080" stroke-width="0.8"/></svg>
<div class="t " style="left:23px;top:435.19px;font-size:11px;line-height:14px;color:#000000;font-weight:normal;">21</div>
<div class="t " style="left:62.2px;top:435.19px;font-size:11px;line-height:14px;color:#000000;font-weight:normal;letter-spacing:-0.785px;">200</div>
<div class="t " style="left:101.4px;top:435.19px;font-size:11px;line-height:14px;color:#000000;font-weight:normal;letter-spacing:-1.295px;">HTTPS</div>
<div class="t " style="left:215.5px;top:435.19px;font-size:11px;line-height:14px;color:#000000;font-weight:normal;letter-spacing:0.068px;">fe2.update.microsoft.com</div>
<div class="t " style="left:352.6px;top:435.19px;font-size:11px;line-height:14px;color:#000000;font-weight:normal;letter-spacing:0.003px;">/v6/ClientWebService/clien...</div>
<div class="t " style="left:515.2px;top:435.19px;font-size:11px;line-height:14px;color:#000000;font-weight:normal;letter-spacing:-0.172px;">76,824</div>
<div class="t " style="left:560.5px;top:435.19px;font-size:11px;line-height:14px;color:#000000;font-weight:normal;letter-spacing:0.083px;">private</div>
<div class="r" style="left:1px;top:1100px;width:791px;height:15px;background:#f0f0f0;"></div>
<div class="r" style="left:18px;top:1100px;width:464px;height:15px;background:#cdcdcd;"></div>
<svg class="r" style="left:5px;top:1103px;" width="6" height="9" viewBox="0 0 6 9"><path d="M5 1 L1.8 4.5 L5 8" fill="none" stroke="#606060" stroke-width="2"/></svg>
<svg class="r" style="left:781px;top:1103px;" width="6" height="9" viewBox="0 0 6 9"><path d="M1 1 L4.2 4.5 L1 8" fill="none" stroke="#606060" stroke-width="2"/></svg>
<div class="r" style="left:1px;top:1116px;width:791px;height:2px;background:#646464;"></div>
<div class="r" style="left:1px;top:1118px;width:791px;height:19px;background:#ffffff;"></div>
<div class="r" style="left:2px;top:1119px;width:789px;height:17px;background:#000000;"></div>
<div class="r" style="left:0px;top:1137px;width:792px;height:1px;background:#6a6a6a;"></div>
<div class="t " style="left:3.8px;top:1120.08px;font-size:11.3px;line-height:14px;color:#6f6f6f;font-weight:normal;letter-spacing:-0.202px;">[QuickExec] ALT+Q &gt; type HELP...</div>
<div class="r" style="left:792px;top:68px;width:1px;height:1069px;background:#646464;"></div>
<div class="r" style="left:793px;top:68px;width:3px;height:1069px;background:#778899;"></div>
<div class="r" style="left:796px;top:68px;width:1px;height:1069px;background:#d4d4d4;"></div>
<div class="r" style="left:797px;top:90px;width:3px;height:1047px;background:#ffffff;"></div>
<div class="r" style="left:797px;top:89px;width:1121px;height:1px;background:#d9d9d9;"></div>
<div class="r" style="left:797px;top:90px;width:1120px;height:1px;background:#ffffff;"></div>
<div class="r" style="left:798px;top:70px;width:76px;height:20px;background:#f0f0f0;box-sizing:border-box;border:1px solid #d9d9d9;border-bottom:none;"></div>
<div class="r" style="left:874px;top:68px;width:88px;height:22px;background:#ffffff;box-sizing:border-box;border:1px solid #d9d9d9;border-bottom:none;"></div>
<div class="r" style="left:962px;top:70px;width:106px;height:20px;background:#f0f0f0;box-sizing:border-box;border:1px solid #d9d9d9;border-bottom:none;"></div>
<div class="r" style="left:1068px;top:70px;width:83px;height:20px;background:#f0f0f0;box-sizing:border-box;border:1px solid #d9d9d9;border-bottom:none;"></div>
<div class="r" style="left:1151px;top:70px;width:92px;height:20px;background:#f0f0f0;box-sizing:border-box;border:1px solid #d9d9d9;border-bottom:none;"></div>
<div class="r" style="left:1243px;top:70px;width:52px;height:20px;background:#f0f0f0;box-sizing:border-box;border:1px solid #d9d9d9;border-bottom:none;"></div>
<div class="r" style="left:1295px;top:70px;width:63px;height:20px;background:#f0f0f0;box-sizing:border-box;border:1px solid #d9d9d9;border-bottom:none;"></div>
<div class="r" style="left:1358px;top:70px;width:70px;height:20px;background:#f0f0f0;box-sizing:border-box;border:1px solid #d9d9d9;border-bottom:none;"></div>
<div class="t " style="left:825.9px;top:74.22px;font-size:10.9px;line-height:14px;color:#000;font-weight:normal;letter-spacing:-0.156px;">Statistics</div>
<div class="t " style="left:902.7px;top:72.22px;font-size:10.9px;line-height:14px;color:#000;font-weight:normal;letter-spacing:0.044px;">Inspectors</div>
<div class="t " style="left:988.0px;top:74.22px;font-size:10.9px;line-height:14px;color:#000;font-weight:normal;letter-spacing:-0.146px;">AutoResponder</div>
<div class="t " style="left:1096.9px;top:74.22px;font-size:10.9px;line-height:14px;color:#000;font-weight:normal;letter-spacing:-0.472px;">Composer</div>
<div class="t " style="left:1178.25px;top:74.22px;font-size:10.9px;line-height:14px;color:#000;font-weight:normal;letter-spacing:-0.163px;">FiddlerScript</div>
<div class="t " style="left:1271.5px;top:74.22px;font-size:10.9px;line-height:14px;color:#000;font-weight:normal;letter-spacing:-0.851px;">Log</div>
<div class="t " style="left:1322.5px;top:74.22px;font-size:10.9px;line-height:14px;color:#000;font-weight:normal;letter-spacing:-0.125px;">Filters</div>
<div class="t " style="left:1385.75px;top:74.22px;font-size:10.9px;line-height:14px;color:#000;font-weight:normal;letter-spacing:-0.502px;">Timeline</div>
<svg class="r" style="left:804px;top:71px;" width="17" height="18" viewBox="0 0 17 18"><rect x="7.3" y="1.3" width="3.2" height="1.6" fill="none" stroke="#000" stroke-width="1"/><path d="M5 3.6 H12.6 L15.6 7 V12.6 L12.4 16.6 H5 L1.6 12.6 V7 Z" fill="#fff" stroke="#000" stroke-width="1.2"/><g fill="#10e8f0"><rect x="9" y="4.3" width="1.2" height="1.2"/><rect x="11.8" y="5.2" width="1.2" height="1.2"/><rect x="13.2" y="7" width="1.2" height="1.2"/><rect x="13.4" y="9" width="1.4" height="1.2"/><rect x="13.2" y="11.8" width="1.2" height="1.2"/><rect x="11.6" y="14" width="1.2" height="1.2"/><rect x="8.8" y="14" width="1.2" height="1.2"/><rect x="3.4" y="12" width="1.2" height="1.2"/><rect x="3.4" y="9" width="1.2" height="1.2"/><rect x="4.4" y="6.4" width="1.2" height="1.2"/><rect x="6.6" y="5.2" width="1.2" height="1.2"/></g><path d="M5.4 6.2 L8.8 9.6" stroke="#000" stroke-width="1"/><path d="M9.8 6.2 V10.8 H8.6" stroke="#000" stroke-width="1.2" fill="none"/><path d="M8.4 11 L5.6 14.8" stroke="#e00000" stroke-width="1.2"/></svg>
<svg class="r" style="left:882px;top:70px;" width="16" height="17" viewBox="0 0 16 17"><g fill="#000"><rect x="1.0" y="1.0" width="1" height="1"/><rect x="0.0" y="2.0" width="1" height="1"/><rect x="2.0" y="2.0" width="1" height="1"/><rect x="1.0" y="3.0" width="1" height="1"/><rect x="4.0" y="1.0" width="1" height="3"/><rect x="7.0" y="1.0" width="1" height="1"/><rect x="6.0" y="2.0" width="1" height="1"/><rect x="8.0" y="2.0" width="1" height="1"/><rect x="7.0" y="3.0" width="1" height="1"/><rect x="10.0" y="1.0" width="1" height="3"/><rect x="13.0" y="1.0" width="1" height="1"/><rect x="12.0" y="2.0" width="1" height="1"/><rect x="14.0" y="2.0" width="1" height="1"/><rect x="13.0" y="3.0" width="1" height="1"/><rect x="1.0" y="5.0" width="1" height="3"/><rect x="10.0" y="5.0" width="1" height="1"/><rect x="9.0" y="6.0" width="1" height="1"/><rect x="11.0" y="6.0" width="1" height="1"/><rect x="10.0" y="7.0" width="1" height="1"/><rect x="13.0" y="5.0" width="1" height="3"/><rect x="1.0" y="9.0" width="1" height="1"/><rect x="0.0" y="10.0" width="1" height="1"/><rect x="2.0" y="10.0" width="1" height="1"/><rect x="1.0" y="11.0" width="1" height="1"/><rect x="4.0" y="9.0" width="1" height="3"/><rect x="13.0" y="9.0" width="1" height="1"/><rect x="12.0" y="10.0" width="1" height="1"/><rect x="14.0" y="10.0" width="1" height="1"/><rect x="13.0" y="11.0" width="1" height="1"/><rect x="1.0" y="13.0" width="1" height="3"/><rect x="4.0" y="13.0" width="1" height="1"/><rect x="3.0" y="14.0" width="1" height="1"/><rect x="5.0" y="14.0" width="1" height="1"/><rect x="4.0" y="15.0" width="1" height="1"/><rect x="7.0" y="13.0" width="1" height="3"/><rect x="10.0" y="13.0" width="1" height="1"/><rect x="9.0" y="14.0" width="1" height="1"/><rect x="11.0" y="14.0" width="1" height="1"/><rect x="10.0" y="15.0" width="1" height="1"/><rect x="13.0" y="13.0" width="1" height="3"/></g><circle cx="5.6" cy="6.6" r="3" fill="#10e8f0" stroke="#202020" stroke-width="0.7"/><circle cx="4.8" cy="5.8" r="0.5" fill="#fff"/><circle cx="6.4" cy="6.6" r="0.5" fill="#fff"/><path d="M8.8 9.8 L13.8 14.2" stroke="#0010f0" stroke-width="2.6" stroke-linecap="round"/><path d="M9 10.1 L13.2 13.8" stroke="#20f0f0" stroke-width="0.8"/></svg>
<svg class="r" style="left:968px;top:72px;" width="15" height="16" viewBox="0 0 15 16"><path d="M12.5 0.5 H7.5 L1.5 8 H6 L1 15.5 L14.5 6 H9 Z" fill="#6d6d6d"/><path d="M2.5 15.5 L14.5 7" stroke="#b0b0b0" stroke-width="0.9"/></svg>
<svg class="r" style="left:1075px;top:72px;" width="18" height="17" viewBox="0 0 18 17"><rect x="1.5" y="1.5" width="12" height="3.5" fill="#e8f0fa" stroke="#5a80b0"/><rect x="1.5" y="6.5" width="12" height="8.5" fill="#e4ecf8" stroke="#5a80b0"/><path d="M5 13 L13 4 L15.3 6 L7.3 15 L4.6 15.5 Z" fill="#f8d048" stroke="#806020" stroke-width="0.7"/><path d="M13 4 L14.2 2.6 L16.5 4.6 L15.3 6 Z" fill="#e05050"/></svg>
<svg class="r" style="left:1156px;top:71px;" width="18" height="18" viewBox="0 0 18 18"><path d="M3 2 C1.5 2 1.5 4 3 4 H4 V12 C4 13.5 2 13.5 2.5 15 H11 V4 H14 C15.5 4 15.5 2 14 2 Z" fill="#f0e070" stroke="#c0a020" stroke-width="0.9"/><rect x="6.5" y="9.5" width="10.5" height="8" fill="#fff" stroke="#555" stroke-width="0.9"/><text x="11.8" y="16.3" font-family="Liberation Sans" font-weight="bold" font-size="7" fill="#000" text-anchor="middle">JS</text></svg>
<svg class="r" style="left:1251px;top:72px;" width="13" height="15" viewBox="0 0 13 15"><rect x="1" y="1" width="10.5" height="12.5" fill="#fff" stroke="#333" stroke-width="1.1"/><path d="M3.3 4.5 H9.2 M3.3 6.5 H9.2 M3.3 8.5 H9.2 M3.3 10.5 H9.2" stroke="#555" stroke-width="0.9"/></svg>
<svg class="r" style="left:1302px;top:73px;" width="16" height="15" viewBox="0 0 16 15"><defs><linearGradient id="fl1" x1="0" y1="0" x2="1" y2="1"><stop offset="0" stop-color="#d8d8d8"/><stop offset="1" stop-color="#ffffff"/></linearGradient></defs><rect x="1.2" y="1.2" width="12" height="12.5" fill="url(#fl1)" stroke="#1a4a80" stroke-width="1.6"/></svg>
<svg class="r" style="left:1363px;top:72px;" width="18" height="16" viewBox="0 0 18 16"><rect x="1" y="2" width="12" height="2" fill="#1a7af0"/><rect x="5" y="7" width="12" height="2" fill="#7a1a80"/><rect x="1" y="11.5" width="10" height="2" fill="#10e8f0"/><rect x="14.5" y="11.5" width="2" height="2" fill="#20d020"/></svg>
<div class="r" style="left:800px;top:90px;width:1117px;height:1px;background:#ffffff;"></div>
<div class="r" style="left:1916px;top:90px;width:1px;height:1046px;background:#ffffff;"></div>
<div class="r" style="left:1917px;top:89px;width:1px;height:1048px;background:#d9d9d9;"></div>
<div class="r" style="left:857px;top:91px;width:1px;height:18px;background:#b0b0b0;"></div>
<div class="r" style="left:922px;top:91px;width:1px;height:18px;background:#b0b0b0;"></div>
<div class="r" style="left:1000px;top:91px;width:1px;height:18px;background:#b0b0b0;"></div>
<div class="r" style="left:1073px;top:91px;width:1px;height:18px;background:#b0b0b0;"></div>
<div class="r" style="left:1136px;top:91px;width:1px;height:18px;background:#b0b0b0;"></div>
<div class="r" style="left:1188px;top:91px;width:1px;height:18px;background:#b0b0b0;"></div>
<div class="r" style="left:1247px;top:91px;width:1px;height:18px;background:#b0b0b0;"></div>
<div class="r" style="left:1299px;top:91px;width:1px;height:18px;background:#b0b0b0;"></div>
<div class="r" style="left:1351px;top:91px;width:1px;height:18px;background:#b0b0b0;"></div>
<div class="r" style="left:1403px;top:91px;width:1px;height:18px;background:#b0b0b0;"></div>
<div class="r" style="left:800px;top:91px;width:52px;height:17px;background:#f4f4f4;box-sizing:border-box;border-top:2px solid #707070;border-left:2px solid #707070;border-bottom:1px solid #ffffff;border-right:1px solid #ffffff;"></div>
<div class="t " style="left:806.0px;top:94.26px;font-size:10.8px;line-height:14px;color:#000;font-weight:normal;letter-spacing:-0.096px;">Headers</div>
<div class="t " style="left:867.5px;top:93.26px;font-size:10.8px;line-height:14px;color:#000;font-weight:normal;letter-spacing:0.102px;">TextView</div>
<div class="t " style="left:933.1px;top:93.26px;font-size:10.8px;line-height:14px;color:#000;font-weight:normal;letter-spacing:-0.041px;">SyntaxView</div>
<div class="t " style="left:1011.4px;top:93.26px;font-size:10.8px;line-height:14px;color:#000;font-weight:normal;letter-spacing:-0.257px;">WebForms</div>
<div class="t " style="left:1084.0px;top:93.26px;font-size:10.8px;line-height:14px;color:#000;font-weight:normal;letter-spacing:-0.191px;">HexView</div>
<div class="t " style="left:1147.7px;top:93.26px;font-size:10.8px;line-height:14px;color:#000;font-weight:normal;letter-spacing:0.069px;">Auth</div>
<div class="t " style="left:1199.4px;top:93.26px;font-size:10.8px;line-height:14px;color:#000;font-weight:normal;letter-spacing:-0.340px;">Cookies</div>
<div class="t " style="left:1258.2px;top:93.26px;font-size:10.8px;line-height:14px;color:#000;font-weight:normal;letter-spacing:-0.177px;">Raw</div>
<div class="t " style="left:1310.5px;top:93.26px;font-size:10.8px;line-height:14px;color:#000;font-weight:normal;letter-spacing:-0.894px;">JSON</div>
<div class="t " style="left:1362.4px;top:93.26px;font-size:10.8px;line-height:14px;color:#000;font-weight:normal;letter-spacing:-1.797px;">XML</div>
<div class="r" style="left:804px;top:113px;width:1108px;height:18px;background:#a0a0a0;"></div>
<div class="t " style="left:807.8px;top:116.24px;font-size:12.3px;line-height:15px;color:#ffffff;font-weight:bold;letter-spacing:0.136px;">Request Headers</div>
<div class="t " style="left:1748.5px;top:115.34px;font-size:12px;line-height:15px;color:#ffff00;font-weight:normal;letter-spacing:-0.137px;">[ Raw ]</div>
<div class="t " style="left:1796.5px;top:115.34px;font-size:12px;line-height:15px;color:#ffff00;font-weight:normal;letter-spacing:0.134px;">[Header Definitions]</div>
<div class="r" style="left:804px;top:131px;width:1108px;height:20px;background:#f0f7fe;box-sizing:border-box;border:1px solid #6e6e6e;box-shadow:inset 1px 1px 0 #fff, inset -1px -1px 0 #fff;"></div>
<div class="t " style="left:806.5px;top:133.45px;font-size:11.7px;line-height:15px;color:#000;font-weight:normal;letter-spacing:-0.343px;">GET /manifest/threshold.appcache HTTP/1.1</div>
<div class="r" style="left:804px;top:151px;width:1092px;height:395px;background:#f0f7fe;"></div>
<div class="r" style="left:1896px;top:151px;width:16px;height:395px;background:#f0f0f0;"></div>
<div class="r" style="left:1896px;top:326px;width:16px;height:180px;background:#cdcdcd;"></div>
<svg class="r" style="left:1899px;top:156px;" width="10" height="7" viewBox="0 0 10 7"><path d="M1 5.5 L5 1.5 L9 5.5" fill="none" stroke="#555" stroke-width="1.6"/></svg>
<svg class="r" style="left:1899px;top:534px;" width="10" height="7" viewBox="0 0 10 7"><path d="M1 1.5 L5 5.5 L9 1.5" fill="none" stroke="#555" stroke-width="1.6"/></svg>
<div class="t " style="left:809px;top:152.02px;font-size:11.5px;line-height:14px;color:#000;font-weight:bold;">Miscellaneous</div>
<div class="t " style="left:827.5px;top:168.19px;font-size:11px;line-height:14px;color:#000;font-weight:normal;letter-spacing:0.127px;">Origin: https://www.bing.com</div>
<div class="t " style="left:827.5px;top:184.19px;font-size:11px;line-height:14px;color:#000;font-weight:normal;letter-spacing:0.227px;">Referer: https://www.bing.com/</div>
<div class="t " style="left:827.5px;top:200.19px;font-size:11px;line-height:14px;color:#000;font-weight:normal;letter-spacing:-0.286px;">X-BM-CBT: 1439430546</div>
<div class="t " style="left:827.5px;top:216.19px;font-size:11px;line-height:14px;color:#000;font-weight:normal;letter-spacing:-0.274px;">X-BM-ClientFeatures: OemEnabled</div>
<div class="t " style="left:827.5px;top:232.19px;font-size:11px;line-height:14px;color:#000;font-weight:normal;letter-spacing:-0.040px;">X-BM-DateFormat: M/d/yyyy</div>
<div class="t " style="left:827.5px;top:248.19px;font-size:11px;line-height:14px;color:#000;font-weight:normal;letter-spacing:-0.302px;">X-BM-DeviceDimensions: 976x768</div>
<div class="t " style="left:827.5px;top:264.19px;font-size:11px;line-height:14px;color:#000;font-weight:normal;letter-spacing:-0.328px;">X-BM-DeviceDimensionsLogical: 976x768</div>
<div class="t " style="left:827.5px;top:280.19px;font-size:11px;line-height:14px;color:#000;font-weight:normal;letter-spacing:-0.368px;">X-BM-DeviceScale: 100</div>
<div class="t " style="left:827.5px;top:296.19px;font-size:11px;line-height:14px;color:#000;font-weight:normal;letter-spacing:-0.399px;">X-BM-DTZ: -420</div>
<div class="t " style="left:827.5px;top:312.19px;font-size:11px;line-height:14px;color:#000;font-weight:normal;letter-spacing:-0.413px;">X-BM-Market: US</div>
<div class="t " style="left:827.5px;top:328.19px;font-size:11px;line-height:14px;color:#000;font-weight:normal;letter-spacing:0.090px;">X-BM-Theme: ffffff;005a9e</div>
<div class="t " style="left:827.5px;top:344.19px;font-size:11px;line-height:14px;color:#000;font-weight:normal;letter-spacing:-0.305px;">X-Device-ClientSession: 1F599916DE2E44A3B71331695D724E42</div>
<div class="t " style="left:827.5px;top:360.19px;font-size:11px;line-height:14px;color:#000;font-weight:normal;letter-spacing:-0.169px;">X-DeviceID: 010002B209002454</div>
<div class="t " style="left:827.5px;top:376.19px;font-size:11px;line-height:14px;color:#000;font-weight:normal;letter-spacing:-0.153px;">X-Device-isOptin: false</div>
<div class="t " style="left:827.5px;top:392.19px;font-size:11px;line-height:14px;color:#000;font-weight:normal;letter-spacing:-0.148px;">X-Device-MachineId: {59AA1A3E-8514-4450-A21A-D06F57304F0D}</div>
<div class="t " style="left:827.5px;top:408.19px;font-size:11px;line-height:14px;color:#000;font-weight:normal;letter-spacing:-0.066px;">X-Device-Manufacturer: Microsoft Corporation</div>
<div class="t " style="left:827.5px;top:424.19px;font-size:11px;line-height:14px;color:#000;font-weight:normal;letter-spacing:0.002px;">X-Device-NetworkType: ethernet</div>
<div class="t " style="left:827.5px;top:440.19px;font-size:11px;line-height:14px;color:#000;font-weight:normal;letter-spacing:-0.422px;">X-Device-OSSKU: 4</div>
<div class="t " style="left:827.5px;top:456.19px;font-size:11px;line-height:14px;color:#000;font-weight:normal;letter-spacing:-0.200px;">X-Device-Product: Virtual Machine</div>
<div class="t " style="left:827.5px;top:472.19px;font-size:11px;line-height:14px;color:#000;font-weight:normal;letter-spacing:-0.376px;">X-Device-SKU: None</div>
<div class="t " style="left:827.5px;top:488.19px;font-size:11px;line-height:14px;color:#000;font-weight:normal;letter-spacing:-0.109px;">X-Device-Touch: false</div>
<div class="t " style="left:827.5px;top:504.19px;font-size:11px;line-height:14px;color:#000;font-weight:normal;letter-spacing:-0.007px;">X-Search-AppId: Microsoft.Windows.Cortana_cw5n1h2txyewy!CortanaUI</div>
<div class="r" style="left:826px;top:519px;width:159px;height:16px;background:#3399ff;"></div>
<div class="t " style="left:827.5px;top:520.19px;font-size:11px;line-height:14px;color:#ffffff;font-weight:normal;letter-spacing:-0.183px;">X-Search-SafeSearch: Moderate</div>
<div class="r" style="left:804px;top:536px;width:1092px;height:10px;overflow:hidden;">
<div class="t" style="left:5px;top:0px;font-size:12px;line-height:14px;font-weight:bold;color:#000">Transport</div>
</div>
<div class="r" style="left:800px;top:549px;width:1116px;height:1px;background:#f8f8f8;"></div>
<div class="r" style="left:800px;top:550px;width:1116px;height:3px;background:#778899;"></div>
<div class="r" style="left:800px;top:553px;width:1116px;height:1px;background:#f8f8f8;"></div>
<div class="r" style="left:875px;top:554px;width:1px;height:17px;background:#b0b0b0;"></div>
<div class="r" style="left:937px;top:554px;width:1px;height:17px;background:#b0b0b0;"></div>
<div class="r" style="left:1003px;top:554px;width:1px;height:17px;background:#b0b0b0;"></div>
<div class="r" style="left:1081px;top:554px;width:1px;height:17px;background:#b0b0b0;"></div>
<div class="r" style="left:1155px;top:554px;width:1px;height:17px;background:#b0b0b0;"></div>
<div class="r" style="left:1218px;top:554px;width:1px;height:17px;background:#b0b0b0;"></div>
<div class="r" style="left:1284px;top:554px;width:1px;height:17px;background:#b0b0b0;"></div>
<div class="r" style="left:1336px;top:554px;width:1px;height:17px;background:#b0b0b0;"></div>
<div class="r" style="left:1396px;top:554px;width:1px;height:17px;background:#b0b0b0;"></div>
<div class="r" style="left:1455px;top:554px;width:1px;height:17px;background:#b0b0b0;"></div>
<div class="r" style="left:1507px;top:554px;width:1px;height:17px;background:#b0b0b0;"></div>
<div class="r" style="left:1559px;top:554px;width:1px;height:17px;background:#b0b0b0;"></div>
<div class="r" style="left:1611px;top:554px;width:1px;height:17px;background:#b0b0b0;"></div>
<div class="r" style="left:1461px;top:554px;width:41px;height:16px;background:#f4f4f4;box-sizing:border-box;border-top:2px solid #707070;border-left:2px solid #707070;border-bottom:1px solid #ffffff;border-right:1px solid #ffffff;"></div>
<div class="t " style="left:805.0px;top:555.26px;font-size:10.8px;line-height:14px;color:#000;font-weight:normal;letter-spacing:0.032px;">Transformer</div>
<div class="t " style="left:886.1px;top:555.26px;font-size:10.8px;line-height:14px;color:#000;font-weight:normal;letter-spacing:-0.104px;">Headers</div>
<div class="t " style="left:948.5px;top:555.26px;font-size:10.8px;line-height:14px;color:#000;font-weight:normal;letter-spacing:0.080px;">TextView</div>
<div class="t " style="left:1014.5px;top:555.26px;font-size:10.8px;line-height:14px;color:#000;font-weight:normal;letter-spacing:-0.052px;">SyntaxView</div>
<div class="t " style="left:1092.7px;top:555.26px;font-size:10.8px;line-height:14px;color:#000;font-weight:normal;letter-spacing:-0.218px;">ImageView</div>
<div class="t " style="left:1166.5px;top:555.26px;font-size:10.8px;line-height:14px;color:#000;font-weight:normal;letter-spacing:-0.241px;">HexView</div>
<div class="t " style="left:1229.3px;top:555.26px;font-size:10.8px;line-height:14px;color:#000;font-weight:normal;letter-spacing:-0.209px;">WebView</div>
<div class="t " style="left:1295.65px;top:555.26px;font-size:10.8px;line-height:14px;color:#000;font-weight:normal;letter-spacing:0.052px;">Auth</div>
<div class="t " style="left:1347.7px;top:555.26px;font-size:10.8px;line-height:14px;color:#000;font-weight:normal;letter-spacing:-0.306px;">Caching</div>
<div class="t " style="left:1407.45px;top:555.26px;font-size:10.8px;line-height:14px;color:#000;font-weight:normal;letter-spacing:-0.332px;">Cookies</div>
<div class="t " style="left:1467.3px;top:556.26px;font-size:10.8px;line-height:14px;color:#000;font-weight:normal;letter-spacing:-0.427px;">Raw</div>
<div class="t " style="left:1519.0px;top:555.26px;font-size:10.8px;line-height:14px;color:#000;font-weight:normal;letter-spacing:-1.194px;">JSON</div>
<div class="t " style="left:1570.2px;top:555.26px;font-size:10.8px;line-height:14px;color:#000;font-weight:normal;letter-spacing:-1.822px;">XML</div>
<div class="r" style="left:804px;top:575px;width:1108px;height:515px;background:#f0f7fe;box-sizing:border-box;border-top:1px solid #a0a0a0;border-left:1px solid #a0a0a0;border-right:1px solid #fff;"></div>
<div class="r" style="left:805px;top:576px;width:1106px;height:514px;background:#f0f7fe;box-sizing:border-box;border-top:1px solid #696969;border-left:1px solid #696969;"></div>
<div class="r" style="left:806px;top:577px;width:1104px;height:512px;overflow:hidden;">
<div class="t mono" style="left:1px;top:2px;font-size:11.67px;line-height:11px;color:#000">HTTP/1.1 200 OK</div>
<div class="t mono" style="left:1px;top:13px;font-size:11.67px;line-height:11px;color:#000">Cache-Control: private</div>
<div class="t mono" style="left:1px;top:24px;font-size:11.67px;line-height:11px;color:#000">Content-Length: 4208</div>
<div class="t mono" style="left:1px;top:35px;font-size:11.67px;line-height:11px;color:#000">Content-Type: text/cache-manifest; charset=utf-8</div>
<div class="t mono" style="left:1px;top:46px;font-size:11.67px;line-height:11px;color:#000">Vary: Accept-Encoding</div>
<div class="t mono" style="left:1px;top:57px;font-size:11.67px;line-height:11px;color:#000">Server: Microsoft-IIS/8.5</div>
<div class="t mono" style="left:1px;top:68px;font-size:11.67px;line-height:11px;color:#000">P3P: CP=&quot;NON UNI COM NAV STA LOC CURa DEVa PSAa PSDa OUR IND&quot;</div>
<div class="t mono" style="left:1px;top:79px;font-size:11.67px;line-height:11px;color:#000">Set-Cookie: _SS=SID=A2A4271F17B448B7859A51ACC064C6CD&amp;CPID=1439430547118&amp;CPH=59a79537; domain=.bing.com; path=/</div>
<div class="t mono" style="left:1px;top:90px;font-size:11.67px;line-height:11px;color:#000">Edge-control: no-store</div>
<div class="t mono" style="left:1px;top:101px;font-size:11.67px;line-height:11px;color:#000">X-MSEdge-Ref: Ref A: 18DE2673B5FC48F986779BC36FB81BC1 Ref B: 615BBF4BFEC531D459969BEA80E3773A Ref C: Wed Aug 12 18:49:07 2015 PST</div>
<div class="t mono" style="left:1px;top:112px;font-size:11.67px;line-height:11px;color:#000">Set-Cookie: _EDGE_S=SID=146139BE79026ECA341231BC78856F8F; path=/; httponly; domain=bing.com</div>
<div class="t mono" style="left:1px;top:123px;font-size:11.67px;line-height:11px;color:#000">Date: Thu, 13 Aug 2015 01:49:07 GMT</div>
<div class="t mono" style="left:1px;top:134px;font-size:11.67px;line-height:11px;color:#000"></div>
<div class="t mono" style="left:1px;top:145px;font-size:11.67px;line-height:11px;color:#000">CACHE MANIFEST</div>
<div class="t mono" style="left:1px;top:156px;font-size:11.67px;line-height:11px;color:#000"># Version:59a79537</div>
<div class="t mono" style="left:1px;top:167px;font-size:11.67px;line-height:11px;color:#000">CACHE:</div>
<div class="t mono" style="left:1px;top:178px;font-size:11.67px;line-height:11px;color:#000">/AS/API/WindowsCortanaPane/V2/Init</div>
<div class="t mono" style="left:1px;top:189px;font-size:11.67px;line-height:11px;color:#000">/devicecontent</div>
<div class="t mono" style="left:1px;top:200px;font-size:11.67px;line-height:11px;color:#000">/rms/Ajax.Bundle/jc/e2d6f5b9/afad0936.js?bu=rms+answers+AjaxSerp+Core%24ajax.shared%2cThreshold%24ajax.history.threshold%2cCore%24ajax.render%2cCore%24ajax.pr</div>
<div class="t mono" style="left:1px;top:211px;font-size:11.67px;line-height:11px;color:#000">/rms/BingCore.Bundle/jc/7ac4d717/912e82cd.js?bu=rms+answers+Shared+BingCore%24shared%2cBingCore%24env.override%2cBingCore%24event.custom.fix%2cBingCore%24ever</div>
<div class="t mono" style="left:1px;top:222px;font-size:11.67px;line-height:11px;color:#000">/rms/BlueBrand/ortl,cc/cfd824f0/ed765317.css?bu=rms+answers+BrandBundle_Mobile+thbrand%24CombinedAsset_Windows_th_b%2cthbrand%24Colors_th_b%2cthbrand%24Type_t</div>
<div class="t mono" style="left:1px;top:233px;font-size:11.67px;line-height:11px;color:#000">/rms/BlueHeader/cir,ortl,cc/e3c56965/692701b1.css?bu=rms+answers+BrandBundle_Mobile+thbrand%24Header_CombinedAsset%2cthbrand%24Header_Colors_th_b%2cthbrand%24</div>
<div class="t mono" style="left:1px;top:244px;font-size:11.67px;line-height:11px;color:#000">/rms/BundledViews/jc/294e005b/5bf7b747.js?bu=rms+views+Threshold+DenseTileLayout%2cErrorMessage%2cInlineError%2cItemList%2cLocalStrings%2cMyStuffHeader%2cMySt</div>
<div class="t mono" style="left:1px;top:255px;font-size:11.67px;line-height:11px;color:#000">/rms/BundledViews/jc/b4a283c6/c30250aa.js?bu=rms+views+Shared+CenteredImagePair%2cAlertWrapper%2cFootnoteWrapper%2cGroupLabel%2cHorizontalList%2cHorizontalLis</div>
<div class="t mono" style="left:1px;top:266px;font-size:11.67px;line-height:11px;color:#000">/rms/Framework/jc/98a1080c/8f35ad43.js?bu=rms+answers+BoxModel+config.threshold%2crules%24rulesThresholdv2%2ccore%2cmodules%24scroll%2cmodules%24resize%2cmodu</div>
<div class="t mono" style="left:1px;top:277px;font-size:11.67px;line-height:11px;color:#000">/rms/rms%20answers%20AutoSuggest%20Modules$Aggregators$FastRankModel/jc/a129a4d8/019ae10c.js</div>
<div class="t mono" style="left:1px;top:288px;font-size:11.67px;line-height:11px;color:#000">/rms/rms%20answers%20AutoSuggest%20Modules$Aggregators$TopHitConfidenceModel/jc/8b3b3f0d/a2d42288.js</div>
<div class="t mono" style="left:1px;top:299px;font-size:11.67px;line-height:11px;color:#000">/rms/rms%20answers%20AutoSuggest%20Partners$BingMDL2/ortl,cc/beb7ff27/cfa7c403.css</div>
<div class="t mono" style="left:1px;top:310px;font-size:11.67px;line-height:11px;color:#000">/rms/rms%20answers%20AutoSuggest%20Partners$CortanaMDL2/ortl,cc/f7ab76d7/53ee1b5a.css</div>
<div class="t mono" style="left:1px;top:321px;font-size:11.67px;line-height:11px;color:#000">/rms/rms%20localizationstrings%20AutoSuggest%20CortanaQF/jc/7ff91eee/b1fb2b4d.js</div>
<div class="t mono" style="left:1px;top:332px;font-size:11.67px;line-height:11px;color:#000">/rms/rms%20localizationstrings%20Feedback%20LocStrings/jc/c495b727/7095ed03.js</div>
<div class="t mono" style="left:1px;top:343px;font-size:11.67px;line-height:11px;color:#000">/rms/rms%20localizationstrings%20Threshold%20LocStrings/jc/7417ae58/35c6ce5b.js</div>
<div class="t mono" style="left:1px;top:354px;font-size:11.67px;line-height:11px;color:#000">/rms/rms%20views%20AutoSuggest%20CortanaIcon/jc/6a0db5d8/5fcfc34f.js</div>
<div class="t mono" style="left:1px;top:365px;font-size:11.67px;line-height:11px;color:#000">/rms/rms%20views%20AutoSuggest%20HighlightedText/jc/bdc92524/a665d6da.js</div>
<div class="t mono" style="left:1px;top:376px;font-size:11.67px;line-height:11px;color:#000">/rms/rms%20views%20AutoSuggest%20Icon/jc/1d07626d/5aee3bc9.js</div>
<div class="t mono" style="left:1px;top:387px;font-size:11.67px;line-height:11px;color:#000">/rms/rms%20views%20AutoSuggest%20WindowsGroup/jc/a994c433/1a7a578f.js</div>
<div class="t mono" style="left:1px;top:398px;font-size:11.67px;line-height:11px;color:#000">/rms/rms%20views%20AutoSuggest%20WindowsGroups/jc/f4bc7ae8/d992fb08.js</div>
<div class="t mono" style="left:1px;top:409px;font-size:11.67px;line-height:11px;color:#000">/rms/rms%20views%20AutoSuggest%20WindowsIndexingMessage/jc/37d01a15/0ddcd001.js</div>
<div class="t mono" style="left:1px;top:420px;font-size:11.67px;line-height:11px;color:#000">/rms/rms%20views%20AutoSuggest%20WindowsPermanentDisambig/jc/b2d078ff/3af57700.js</div>
<div class="t mono" style="left:1px;top:431px;font-size:11.67px;line-height:11px;color:#000">/rms/rms%20views%20AutoSuggest%20WindowsSuggestionSingleLine/jc/47443b66/71c75da2.js</div>
<div class="t mono" style="left:1px;top:442px;font-size:11.67px;line-height:11px;color:#000">/rms/rms%20views%20AutoSuggest%20WindowsSuggestionThreeLines/jc/d81a320f/47208a13.js</div>
<div class="t mono" style="left:1px;top:453px;font-size:11.67px;line-height:11px;color:#000">/rms/rms%20views%20AutoSuggest%20WindowsTopResults/jc/3e2a1f02/7a4f4337.js</div>
<div class="t mono" style="left:1px;top:464px;font-size:11.67px;line-height:11px;color:#000">/rms/SparkleFramework/jc/606a5107/e9d3b945.js?bu=rms+serp+snr%24react-with-addons.min.source%2csnr%24Sparkle.source%2csnr%24Sparkle.React.source%2csnr%24Resou</div>
<div class="t mono" style="left:1px;top:475px;font-size:11.67px;line-height:11px;color:#000">NETWORK:</div>
<div class="t mono" style="left:1px;top:486px;font-size:11.67px;line-height:11px;color:#000">*</div>
<div class="t mono" style="left:1px;top:497px;font-size:11.67px;line-height:11px;color:#000"></div>
</div>
<div class="r" style="left:806px;top:1090px;width:1104px;height:15px;background:#f0f0f0;"></div>
<div class="r" style="left:823px;top:1090px;width:238px;height:15px;background:#cdcdcd;"></div>
<div class="r" style="left:806px;top:1089px;width:1104px;height:1px;background:#ffffff;"></div>
<div class="r" style="left:806px;top:1106px;width:1104px;height:1px;background:#e0e0e0;"></div>
<svg class="r" style="left:811px;top:1093px;" width="6" height="9" viewBox="0 0 6 9"><path d="M5 1 L1.8 4.5 L5 8" fill="none" stroke="#606060" stroke-width="2"/></svg>
<svg class="r" style="left:1899px;top:1093px;" width="6" height="9" viewBox="0 0 6 9"><path d="M1 1 L4.2 4.5 L1 8" fill="none" stroke="#606060" stroke-width="2"/></svg>
<div class="r" style="left:804px;top:1090px;width:1px;height:15px;background:#a0a0a0;"></div>
<div class="r" style="left:805px;top:1090px;width:1px;height:15px;background:#696969;"></div>
<div class="r" style="left:803px;top:1107px;width:1009px;height:1px;background:#ffffff;"></div>
<div class="r" style="left:803px;top:1107px;width:1px;height:24px;background:#ffffff;"></div>
<div class="r" style="left:804px;top:1108px;width:1008px;height:22px;background:#a8a8a8;"></div>
<div class="r" style="left:807px;top:1108px;width:1003px;height:21px;background:#ffffff;box-sizing:border-box;border:1px solid #646464;"></div>
<div class="t " style="left:811.0px;top:1110.19px;font-size:11px;line-height:14px;color:#6d6d6d;font-weight:normal;letter-spacing:0.015px;">Find... (press Ctrl+Enter to highlight all)</div>
<div class="r" style="left:1812px;top:1108px;width:100px;height:22px;background:#a8a8a8;"></div>
<div class="r" style="left:1812px;top:1108px;width:98px;height:20px;background:#f0f0f0;box-sizing:border-box;border:1px solid #000;box-shadow:inset 1px 1px 0 #fff, inset -1px -1px 0 #fff;"></div>
<div class="t " style="left:1761px;width:200px;text-align:center;top:1111.19px;font-size:11px;line-height:14px;color:#000;font-weight:normal;">View in Notepad</div>
<div class="r" style="left:800px;top:1135px;width:1116px;height:1px;background:#ffffff;"></div>
<div class="r" style="left:800px;top:1136px;width:1118px;height:1px;background:#d9d9d9;"></div>
<div class="r" style="left:0px;top:1138px;width:1920px;height:22px;background:#f0f0f0;"></div>
<div class="r" style="left:797px;top:1138px;width:1123px;height:1px;background:#d8d8d8;"></div>
<div class="r" style="left:84px;top:1140px;width:1px;height:19px;background:#d5d5d5;"></div>
<div class="r" style="left:194px;top:1140px;width:1px;height:19px;background:#d5d5d5;"></div>
<div class="r" style="left:216px;top:1140px;width:1px;height:19px;background:#d5d5d5;"></div>
<div class="r" style="left:296px;top:1140px;width:1px;height:19px;background:#d5d5d5;"></div>
<svg class="r" style="left:89px;top:1143px;" width="17" height="15" viewBox="0 0 17 15"><rect x="0.5" y="0.5" width="15" height="13" fill="#fff" stroke="#777"/><rect x="1" y="1" width="14" height="2" fill="#c8c8c8"/><rect x="13" y="1" width="2" height="2" fill="#e02020"/><path d="M2.5 6.5 H8 M2.5 9 H8 M2.5 11.5 H8" stroke="#aaa"/><path d="M9.5 5 H11.5 V7.5 H9.5 Z M12 5 H14 V7.5 H12 Z M9.5 8 H11.5 V11 H9.5 Z M12 8 H14 V11 H12 Z" fill="#1aa0f0"/></svg>
<div class="t " style="left:108.1px;top:1143.19px;font-size:11px;line-height:14px;color:#000;font-weight:normal;letter-spacing:-0.248px;">Non-Browser</div>
<div class="t " style="left:244.7px;top:1143.19px;font-size:11px;line-height:14px;color:#000;font-weight:normal;letter-spacing:-0.120px;">1 / 21</div>
<div class="t " style="left:300.3px;top:1143.12px;font-size:11.2px;line-height:14px;color:#000;font-weight:normal;letter-spacing:-0.009px;">https://www.bing.com/manifest/threshold.appcache</div>
<svg class="r" style="left:1908px;top:1150px;" width="12" height="12" viewBox="0 0 12 12"><g fill="#b8b8b8"><rect x="8" y="0" width="2" height="2"/><rect x="4" y="4" width="2" height="2"/><rect x="8" y="4" width="2" height="2"/><rect x="0" y="8" width="2" height="2"/><rect x="4" y="8" width="2" height="2"/><rect x="8" y="8" width="2" height="2"/></g></svg>
</body></html>
